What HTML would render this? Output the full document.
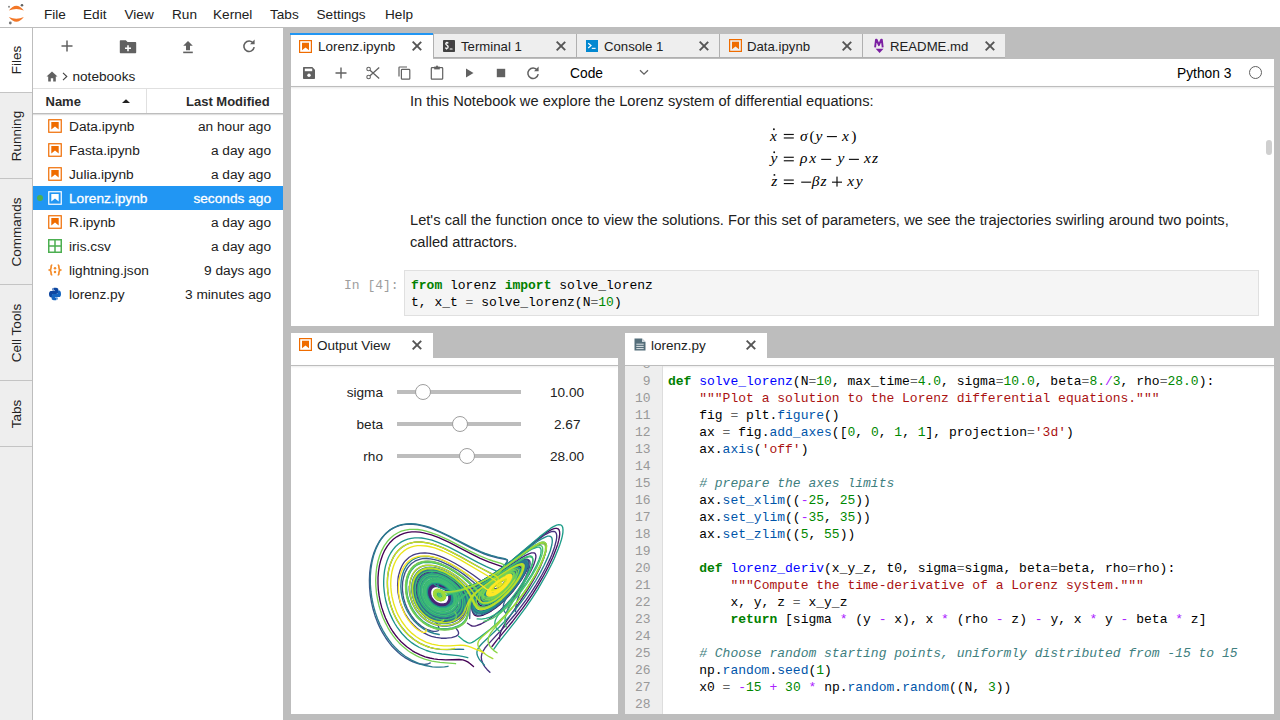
<!DOCTYPE html>
<html><head><meta charset="utf-8">
<style>
*{box-sizing:border-box;margin:0;padding:0}
html,body{width:1280px;height:720px;overflow:hidden;background:#fff}
body{position:relative;font-family:"Liberation Sans",sans-serif;color:#212121;font-size:13.5px}
.a{position:absolute}
.t{position:absolute;white-space:nowrap;line-height:1}
/* menubar */
#menubar{left:0;top:0;width:1280px;height:28px;background:#fff;border-bottom:1px solid #bdbdbd}
.mi{position:absolute;top:8px;font-size:13.6px;color:#212121;line-height:14px}
/* left sidebar */
#sidebar{left:0;top:28px;width:33px;height:692px;background:#eeeeee;border-right:1px solid #bdbdbd}
.stab{position:absolute;left:0;width:32px;border-bottom:1px solid #c4c4c4}
.stab span{position:absolute;left:calc(50% + 1px);top:50%;transform:translate(-50%,-50%) rotate(-90deg);white-space:nowrap;font-size:13.5px;color:#212121;line-height:14px}
/* file browser */
#fb{left:33px;top:28px;width:250px;height:692px;background:#fff}
.frow{position:absolute;left:33px;width:250px;height:24px}
.frow .nm{position:absolute;left:36px;top:6px;font-size:13.7px;line-height:14px}
.frow .md{position:absolute;right:12px;top:6px;font-size:13.7px;line-height:14px;text-align:right}
.frow svg{position:absolute;left:15px;top:5px}
#dock{left:283px;top:28px;width:997px;height:692px;background:#bdbdbd}
.tab{position:absolute;height:24px;width:143px;background:#eeeeee;border-left:1px solid #b0b0b0;border-bottom:1px solid #b0b0b0}
.tab .tl{position:absolute;top:6px;font-size:13.2px;line-height:14px;color:#212121}
.tab .ic{position:absolute;left:9px;top:6px}
.cx{position:absolute;width:10px;height:10px}
.cx:before,.cx:after{content:"";position:absolute;left:4.2px;top:-1px;width:1.6px;height:12px;background:#555}
.cx:before{transform:rotate(45deg)}
.cx:after{transform:rotate(-45deg)}
.code{font-family:"Liberation Mono",monospace;font-size:13px;line-height:17px;white-space:pre}
.kw{color:#008000;font-weight:bold}
.df{color:#0000ff}
.pr{color:#05a}
.nu{color:#080}
.st{color:#a11}
.op{color:#aa22ff}
.cm{color:#408080;font-style:italic}
.ln{color:#999}
.eqo{color:#666}
.slab{position:absolute;font-size:13.6px;line-height:14px;text-align:right;white-space:nowrap}
.trk{position:absolute;left:397px;width:124px;height:4px;background:#bdbdbd}
.hdl{position:absolute;width:16px;height:16px;border-radius:50%;background:#fff;border:1px solid #9e9e9e}
.lorenz{position:absolute;left:0;top:0}
.mdt{font-size:14.65px;line-height:14.65px;color:#212121}
.eq{position:absolute;font-family:"Liberation Serif",serif;font-style:italic;font-size:15.5px;line-height:15.5px;white-space:nowrap;color:#000}
.eqr{position:absolute;font-family:"Liberation Serif",serif;font-size:16px;line-height:16px;white-space:nowrap;color:#000}
.dot{position:absolute;width:1.8px;height:1.8px;background:#000;border-radius:50%}
.bar{position:absolute;height:1.2px;background:#111}
</style></head><body>
<!-- MENUBAR -->
<div id="menubar" class="a">
  <svg class="a" style="left:0;top:0" width="30" height="27" viewBox="0 0 30 27">
    <path d="M8.8 10.6Q16.3 0.9 23.9 10.6Q16.3 7.2 8.8 10.6Z" fill="#f37726"/>
    <path d="M8.8 17Q16.3 26.6 23.9 17Q16.3 20.6 8.8 17Z" fill="#f37726"/>
    <circle cx="22" cy="5.2" r="1.3" fill="#616262"/>
    <circle cx="9" cy="6.8" r="1" fill="#8a8a8a"/>
    <circle cx="10.3" cy="23" r="1.4" fill="#767677"/>
  </svg>
  <span class="mi" style="left:44px">File</span>
  <span class="mi" style="left:83px">Edit</span>
  <span class="mi" style="left:124.5px">View</span>
  <span class="mi" style="left:172px">Run</span>
  <span class="mi" style="left:213px">Kernel</span>
  <span class="mi" style="left:270px">Tabs</span>
  <span class="mi" style="left:316.5px">Settings</span>
  <span class="mi" style="left:385px">Help</span>
</div>
<!-- SIDEBAR -->
<div id="sidebar" class="a">
  <div class="stab" style="top:0;height:65px;background:#fff"><span>Files</span></div>
  <div class="stab" style="top:65px;height:86px"><span>Running</span></div>
  <div class="stab" style="top:151px;height:106px"><span>Commands</span></div>
  <div class="stab" style="top:257px;height:96px"><span>Cell Tools</span></div>
  <div class="stab" style="top:353px;height:66px"><span>Tabs</span></div>
</div>
<!-- FILE BROWSER -->
<div id="fb" class="a">
  <!-- toolbar icons -->
  <svg class="a" style="left:27px;top:11px" width="14" height="14" viewBox="0 0 14 14"><path d="M7 1.5V12.5M1.5 7H12.5" stroke="#616161" stroke-width="1.5"/></svg>
  <svg class="a" style="left:86px;top:11px" width="18" height="15" viewBox="0 0 18 15"><path d="M1.5 1.2H6.8L8.6 3H16.2C16.8 3 17.2 3.4 17.2 4V13.2C17.2 13.8 16.8 14.2 16.2 14.2H1.8C1.2 14.2 0.8 13.8 0.8 13.2V2C0.8 1.5 1.1 1.2 1.5 1.2Z" fill="#616161"/><path d="M9 6.3V12.3M6 9.3H12" stroke="#fff" stroke-width="1.6"/></svg>
  <svg class="a" style="left:149px;top:12px" width="12" height="14" viewBox="0 0 12 14"><path d="M6 1L10.8 5.8H8V10.3H4V5.8H1.2Z" fill="#616161"/><rect x="1.2" y="11.6" width="9.6" height="1.6" fill="#616161"/></svg>
  <svg class="a" style="left:209px;top:11px" width="14" height="14" viewBox="0 0 14 14"><path d="M11.3 4.2A5.2 5.2 0 1 0 12.2 8.2" fill="none" stroke="#616161" stroke-width="1.6"/><path d="M8 5.2H12.6V0.6Z" fill="#616161"/></svg>
  <!-- breadcrumb -->
  <svg class="a" style="left:13px;top:43px" width="12" height="11" viewBox="0 0 12 11"><path d="M6 0.5L11.5 5.6H9.8V10.5H7.2V7.2H4.8V10.5H2.2V5.6H0.5Z" fill="#616161"/></svg>
  <svg class="a" style="left:29px;top:44px" width="6" height="9" viewBox="0 0 6 9"><path d="M1 0.8L4.8 4.5L1 8.2" fill="none" stroke="#424242" stroke-width="1.1"/></svg>
  <span class="t" style="left:39.5px;top:42px;font-size:13.6px">notebooks</span>
  <!-- header -->
  <div class="a" style="left:0;top:60px;width:250px;height:26px;border-top:1px solid #e0e0e0;border-bottom:1px solid #bdbdbd;box-shadow:0 1px 1px rgba(0,0,0,0.12)"></div>
  <div class="a" style="left:113px;top:61px;width:1px;height:24px;background:#e0e0e0"></div>
  <span class="t" style="left:12.5px;top:67px;font-size:13px;font-weight:bold;color:#2b2b2b">Name</span>
  <svg class="a" style="left:89px;top:71px" width="8" height="4" viewBox="0 0 8 4"><path d="M0 4L4 0.2L8 4Z" fill="#212121"/></svg>
  <span class="t" style="left:153px;top:67px;font-size:13px;font-weight:bold;color:#2b2b2b">Last Modified</span>
</div>
<div class="frow" style="top:114px;"><svg width="14" height="14" viewBox="0 0 14 14"><rect x="0.75" y="0.75" width="12.5" height="12.5" fill="none" stroke="#ef6c00" stroke-width="1.2"/><path d="M3.3 3H10.7V10.6L7 7.6L3.3 10.6Z" fill="#ef6c00"/></svg><span class="nm">Data.ipynb</span><span class="md">an hour ago</span></div>
<div class="frow" style="top:138px;"><svg width="14" height="14" viewBox="0 0 14 14"><rect x="0.75" y="0.75" width="12.5" height="12.5" fill="none" stroke="#ef6c00" stroke-width="1.2"/><path d="M3.3 3H10.7V10.6L7 7.6L3.3 10.6Z" fill="#ef6c00"/></svg><span class="nm">Fasta.ipynb</span><span class="md">a day ago</span></div>
<div class="frow" style="top:162px;"><svg width="14" height="14" viewBox="0 0 14 14"><rect x="0.75" y="0.75" width="12.5" height="12.5" fill="none" stroke="#ef6c00" stroke-width="1.2"/><path d="M3.3 3H10.7V10.6L7 7.6L3.3 10.6Z" fill="#ef6c00"/></svg><span class="nm">Julia.ipynb</span><span class="md">a day ago</span></div>
<div class="frow" style="top:186px;background:#2196f3;color:#fff;"><div class="a" style="left:4px;top:9px;width:6px;height:6px;border-radius:50%;background:#4caf50"></div><svg width="14" height="14" viewBox="0 0 14 14"><rect x="0.75" y="0.75" width="12.5" height="12.5" fill="none" stroke="#fff" stroke-width="1.2"/><path d="M3.3 3H10.7V10.6L7 7.6L3.3 10.6Z" fill="#fff"/></svg><span class="nm" style="-webkit-text-stroke:0.3px #fff">Lorenz.ipynb</span><span class="md" style="-webkit-text-stroke:0.3px #fff">seconds ago</span></div>
<div class="frow" style="top:210px;"><svg width="14" height="14" viewBox="0 0 14 14"><rect x="0.75" y="0.75" width="12.5" height="12.5" fill="none" stroke="#ef6c00" stroke-width="1.2"/><path d="M3.3 3H10.7V10.6L7 7.6L3.3 10.6Z" fill="#ef6c00"/></svg><span class="nm">R.ipynb</span><span class="md">a day ago</span></div>
<div class="frow" style="top:234px;"><svg width="14" height="14" viewBox="0 0 14 14"><rect x="0.75" y="0.75" width="12.5" height="12.5" fill="none" stroke="#4caf50" stroke-width="1.5"/><path d="M7 1V13M1 7H13" stroke="#4caf50" stroke-width="1.5"/></svg><span class="nm">iris.csv</span><span class="md">a day ago</span></div>
<div class="frow" style="top:258px;"><svg width="14" height="14" viewBox="0 0 14 14"><path d="M4.3 2.2C3 2.2 3.1 3.2 3.1 4.4S3 6.4 1.6 7C3 7.6 3.1 8.6 3.1 9.8S3 11.8 4.3 11.8M9.7 2.2C11 2.2 10.9 3.2 10.9 4.4S11 6.4 12.4 7C11 7.6 10.9 8.6 10.9 9.8S11 11.8 9.7 11.8" fill="none" stroke="#f48c2a" stroke-width="1.7"/><circle cx="7" cy="5.2" r="1.25" fill="#f48c2a"/><circle cx="7" cy="8.9" r="1.25" fill="#f48c2a"/></svg><span class="nm">lightning.json</span><span class="md">9 days ago</span></div>
<div class="frow" style="top:282px;"><svg width="14" height="14" viewBox="0 0 14 14"><path d="M6.9 0.8C4.2 0.8 4.4 2 4.4 2V3.4H7V3.9H3.2C3.2 3.9 1 3.6 1 7.1S3 10.4 3 10.4H4.1V8.8C4.1 8.8 4 6.9 6 6.9H8.5C8.5 6.9 10.3 6.9 10.3 5.1V2.3C10.3 2.3 10.6 0.8 6.9 0.8ZM5.5 1.6A0.5 0.5 0 1 1 5.5 2.6A0.5 0.5 0 1 1 5.5 1.6Z" fill="#0d47a1"/><path d="M7.1 13.2C9.8 13.2 9.6 12 9.6 12V10.6H7V10.1H10.8C10.8 10.1 13 10.4 13 6.9S11 3.6 11 3.6H9.9V5.2C9.9 5.2 10 7.1 8 7.1H5.5C5.5 7.1 3.7 7.1 3.7 8.9V11.7C3.7 11.7 3.4 13.2 7.1 13.2ZM8.5 12.4A0.5 0.5 0 1 1 8.5 11.4A0.5 0.5 0 1 1 8.5 12.4Z" fill="#1565c0"/></svg><span class="nm">lorenz.py</span><span class="md">3 minutes ago</span></div>
<div id="dock" class="a"></div>
<!-- NOTEBOOK PANEL -->
<div class="a" style="left:290px;top:33px;width:143px;height:27px;background:#fff;border-top:2px solid #2196f3"></div><div class="a" style="left:290px;top:35px;width:1px;height:25px;background:#b9b9b9"></div>
<div class="a" style="left:299px;top:40px"><svg class="ic" width="13" height="13" viewBox="0 0 13 13"><rect x="0.6" y="0.6" width="11.8" height="11.8" fill="none" stroke="#ef6c00" stroke-width="1.2"/><path d="M3 2.8H10V10.2L6.5 7.4L3 10.2Z" fill="#ef6c00"/></svg></div>
<span class="t" style="left:318px;top:40px;font-size:13.5px">Lorenz.ipynb</span>
<div class="cx" style="left:412px;top:41px"></div>
<div class="tab" style="left:433px;top:34px"><svg class="ic" style="top:6px;left:9px" width="12" height="12" viewBox="0 0 12 12"><rect x="0" y="0" width="12" height="12" rx="0.8" fill="#424242"/><path d="M5.2 3.4C4.8 2.6 3.2 2.5 2.8 3.4C2.4 4.4 3.6 5 4.2 5.4C5 5.9 5.4 6.6 5 7.6C4.5 8.6 2.8 8.5 2.3 7.7" fill="none" stroke="#fff" stroke-width="1.3"/><path d="M3.9 1.8V2.6M3.6 8.6V9.6" stroke="#fff" stroke-width="1"/><rect x="6.6" y="8.6" width="3" height="1" rx="0.5" fill="#fff"/><circle cx="8.2" cy="2.2" r="0.45" fill="#4a2a4a"/><circle cx="8.2" cy="4.2" r="0.45" fill="#4a2a4a"/><circle cx="8.2" cy="6.2" r="0.45" fill="#4a2a4a"/></svg><span class="tl" style="left:27px">Terminal 1</span><div class="cx" style="left:122px;top:7px"></div></div>
<div class="tab" style="left:576px;top:34px"><svg class="ic" style="top:6px;left:9px" width="12" height="12" viewBox="0 0 12 12"><rect x="0" y="0" width="12" height="12" fill="#0288d1"/><path d="M2.2 3.2L5 5.6L2.2 8" fill="none" stroke="#fff" stroke-width="1.2"/><rect x="5.8" y="7.8" width="3.8" height="1.1" fill="#fff"/></svg><span class="tl" style="left:27px">Console 1</span><div class="cx" style="left:122px;top:7px"></div></div>
<div class="tab" style="left:719px;top:34px"><svg class="ic" style="top:5px;left:9px" width="13" height="13" viewBox="0 0 13 13"><rect x="0.6" y="0.6" width="11.8" height="11.8" fill="none" stroke="#ef6c00" stroke-width="1.2"/><path d="M3 2.8H10V10.2L6.5 7.4L3 10.2Z" fill="#ef6c00"/></svg><span class="tl" style="left:27px">Data.ipynb</span><div class="cx" style="left:122px;top:7px"></div></div>
<div class="tab" style="left:862px;top:34px;border-right:0"><svg class="ic" style="top:3px;left:9px" width="14" height="20" viewBox="0 0 14 20"><path d="M3.1 10.4L4 2.6H4.6L6.9 8.2L9.2 2.6H9.8L10.7 10.4" fill="none" stroke="#7b1fa2" stroke-width="1.9" stroke-linejoin="round"/><path d="M3.7 11.8H11.5L7.6 16Z" fill="#7b1fa2"/></svg><span class="tl" style="left:27px">README.md</span><div class="cx" style="left:122px;top:7px"></div></div>
<div class="a" style="left:291px;top:59px;width:983px;height:267px;background:#fff"></div>
<div class="a" style="left:291px;top:86px;width:983px;height:1px;background:#bdbdbd;box-shadow:0 1px 2px rgba(0,0,0,0.15)"></div>

<!-- NB TOOLBAR -->
<svg class="a" style="left:303px;top:67px" width="12" height="12" viewBox="0 0 12 12"><path d="M0 1C0 0.4 0.4 0 1 0H9.3L12 2.7V11C12 11.6 11.6 12 11 12H1C0.4 12 0 11.6 0 11Z" fill="#616161"/><rect x="1.8" y="1.6" width="7.4" height="2.6" fill="#fff"/><circle cx="6" cy="8.3" r="1.7" fill="#fff"/></svg>
<svg class="a" style="left:335px;top:67px" width="12" height="12" viewBox="0 0 12 12"><path d="M6 0.5V11.5M0.5 6H11.5" stroke="#616161" stroke-width="1.4"/></svg>
<svg class="a" style="left:366px;top:66px" width="14" height="14" viewBox="0 0 14 14"><circle cx="2.6" cy="3" r="1.8" fill="none" stroke="#616161" stroke-width="1.1"/><circle cx="2.6" cy="11" r="1.8" fill="none" stroke="#616161" stroke-width="1.1"/><path d="M4 4.2L13.2 12.6M4 9.8L13.2 1.4" stroke="#616161" stroke-width="1.3"/></svg>
<svg class="a" style="left:398px;top:66px" width="13" height="14" viewBox="0 0 13 14"><path d="M1 10.5V1.6C1 1.2 1.2 1 1.6 1H9" fill="none" stroke="#616161" stroke-width="1.2"/><rect x="3.4" y="3.4" width="8.4" height="9.8" rx="0.8" fill="none" stroke="#616161" stroke-width="1.2"/></svg>
<svg class="a" style="left:430px;top:65px" width="14" height="15" viewBox="0 0 14 15"><rect x="1.3" y="2.6" width="11.4" height="11.6" rx="0.8" fill="none" stroke="#616161" stroke-width="1.2"/><path d="M4.2 1.6H9.8V4.4H4.2Z" fill="#616161"/><circle cx="7" cy="1.4" r="1" fill="#616161"/></svg>
<svg class="a" style="left:465px;top:68px" width="9" height="10" viewBox="0 0 9 10"><path d="M1 0.6L8.5 5L1 9.4Z" fill="#616161"/></svg>
<svg class="a" style="left:496px;top:68px" width="10" height="10" viewBox="0 0 10 10"><rect x="0.8" y="0.8" width="8.4" height="8.4" fill="#616161"/></svg>
<svg class="a" style="left:526px;top:66px" width="14" height="14" viewBox="0 0 14 14"><path d="M11.3 4.2A5.2 5.2 0 1 0 12.2 8.2" fill="none" stroke="#616161" stroke-width="1.5"/><path d="M8 5.2H12.6V0.6Z" fill="#616161"/></svg>
<span class="t" style="left:570px;top:67px;font-size:13.8px;color:#000">Code</span>
<svg class="a" style="left:639px;top:69px" width="10" height="7" viewBox="0 0 10 7"><path d="M1 1.2L5 5.2L9 1.2" fill="none" stroke="#616161" stroke-width="1.3"/></svg>
<span class="t" style="left:1177px;top:67px;font-size:13.8px;color:#000">Python 3</span>
<div class="a" style="left:1249px;top:66px;width:13px;height:13px;border:1.2px solid #616161;border-radius:50%"></div>
<!-- NB CONTENT -->
<span class="t mdt" style="left:410px;top:93.6px">In this Notebook we explore the Lorenz system of differential equations:</span>
<span class="eq" style="left:769.9px;top:127.5px;">x</span>
<span class="eq" style="left:800.1px;top:127.5px;">σ</span>
<span class="eq" style="left:809.5px;top:127.5px;font-style:normal;">(</span>
<span class="eq" style="left:815.5px;top:127.5px;">y</span>
<span class="eq" style="left:842.1px;top:127.5px;">x</span>
<span class="eq" style="left:851.2px;top:127.5px;font-style:normal;">)</span>
<span class="eq" style="left:770.5px;top:150.3px;">y</span>
<span class="eq" style="left:800.1px;top:150.3px;">ρ</span>
<span class="eq" style="left:809.2px;top:150.3px;">x</span>
<span class="eq" style="left:837.5px;top:150.3px;">y</span>
<span class="eq" style="left:864.1px;top:150.3px;">x</span>
<span class="eq" style="left:872.0px;top:150.3px;">z</span>
<span class="eq" style="left:771.2px;top:173.1px;">z</span>
<span class="eq" style="left:811.7px;top:173.1px;">β</span>
<span class="eq" style="left:820.5px;top:173.1px;">z</span>
<span class="eq" style="left:847.2px;top:173.1px;">x</span>
<span class="eq" style="left:855.8px;top:173.1px;">y</span>
<svg class="a" style="left:0;top:0" width="1280" height="200" viewBox="0 0 1280 200"><g fill="#111"><rect x="783.8" y="133.9" width="10" height="1.15"/><rect x="783.8" y="137.4" width="10" height="1.15"/><rect x="826.9" y="136.0" width="10" height="1.15"/><rect x="783.8" y="156.7" width="10" height="1.15"/><rect x="783.8" y="160.2" width="10" height="1.15"/><rect x="821.2" y="158.8" width="10" height="1.15"/><rect x="848.9" y="158.8" width="10" height="1.15"/><rect x="783.8" y="179.5" width="10" height="1.15"/><rect x="783.8" y="183.0" width="10" height="1.15"/><rect x="801.2" y="181.6" width="10" height="1.15"/><rect x="832.0" y="181.6" width="10" height="1.15"/><rect x="836.4" y="176.6" width="1.2" height="10"/><circle cx="773.9" cy="129.2" r="0.95"/><circle cx="774.2" cy="152.2" r="0.95"/><circle cx="774.4" cy="174.9" r="0.95"/></g></svg>
<span class="t mdt" style="left:410px;top:212.5px;word-spacing:0.22px">Let's call the function once to view the solutions. For this set of parameters, we see the trajectories swirling around two points,</span>
<span class="t mdt" style="left:410px;top:235px">called attractors.</span>
<span class="a code" style="left:344px;top:276.5px;color:#9e9e9e">In [4]:</span>
<div class="a" style="left:404px;top:270px;width:855px;height:46px;background:#f5f5f5;border:1px solid #e0e0e0"></div>
<div class="a code" style="left:411px;top:276.5px;color:#000"><span class="kw">from</span> lorenz <span class="kw">import</span> solve_lorenz
t, x_t <span class="eqo">=</span> solve_lorenz(N<span class="eqo">=</span><span class="nu">10</span>)</div>
<div class="a" style="left:1266px;top:140px;width:6px;height:15px;border-radius:3px;background:#cfcfcf"></div>
<!-- LOWER PANELS -->
<div class="a" style="left:291px;top:333px;width:142px;height:25px;background:#fff"></div>
<div class="a" style="left:299px;top:338px"><svg class="a" width="13" height="13" viewBox="0 0 13 13"><rect x="0.6" y="0.6" width="11.8" height="11.8" fill="none" stroke="#ef6c00" stroke-width="1.2"/><path d="M3 2.8H10V10.2L6.5 7.4L3 10.2Z" fill="#ef6c00"/></svg></div>
<span class="t" style="left:317px;top:339px;font-size:13.5px">Output View</span>
<div class="cx" style="left:412px;top:340px"></div>
<div class="a" style="left:291px;top:358px;width:327px;height:356px;background:#fff"></div>
<div class="a" style="left:291px;top:365px;width:327px;height:1px;background:#bdbdbd;box-shadow:0 1px 2px rgba(0,0,0,0.12)"></div>
<span class="slab" style="right:897px;top:386px">sigma</span>
<div class="trk" style="top:390px"></div><div class="hdl" style="left:415px;top:384px"></div>
<span class="t" style="left:550px;top:386px;font-size:13.6px">10.00</span>
<span class="slab" style="right:897px;top:418px">beta</span>
<div class="trk" style="top:422px"></div><div class="hdl" style="left:452px;top:416px"></div>
<span class="t" style="left:554px;top:418px;font-size:13.6px">2.67</span>
<span class="slab" style="right:897px;top:450px">rho</span>
<div class="trk" style="top:454px"></div><div class="hdl" style="left:459px;top:448px"></div>
<span class="t" style="left:550px;top:450px;font-size:13.6px">28.00</span>
<div class="a" style="left:625px;top:333px;width:142px;height:25px;background:#fff"></div>
<div class="a" style="left:634px;top:338px"><svg class="a" width="12" height="13" viewBox="0 0 12 13"><path d="M0.5 0.5H8L11.5 4V12.5H0.5Z" fill="#546e7a"/><path d="M8 0.5V4H11.5" fill="#cfd8dc"/><path d="M2.3 6.2H9.7M2.3 8.4H9.7M2.3 10.6H9.7" stroke="#dfe5e8" stroke-width="1"/></svg></div>
<span class="t" style="left:651px;top:339px;font-size:13.5px">lorenz.py</span>
<div class="cx" style="left:746px;top:340px"></div>
<div class="a" style="left:625px;top:358px;width:649px;height:356px;background:#fff"></div>
<div class="a" style="left:625px;top:365px;width:649px;height:1px;background:#bdbdbd;box-shadow:0 1px 2px rgba(0,0,0,0.12)"></div>
<div class="a" style="left:625px;top:366px;width:38px;height:348px;background:#eeeeee"></div>
<div class="a" style="left:625px;top:366px;width:649px;height:348px;overflow:hidden">
<div class="a" style="left:37px;top:0;width:1px;height:348px;background:#dddddd"></div>
<div class="a code ln" style="left:0;top:-10.1px;width:25.5px;text-align:right">8
9
10
11
12
13
14
15
16
17
18
19
20
21
22
23
24
25
26
27
28
29</div>
<div class="a code" style="left:43px;top:-10.1px;color:#000">
<span class="kw">def</span> <span class="df">solve_lorenz</span>(N<span class="eqo">=</span><span class="nu">10</span>, max_time<span class="eqo">=</span><span class="nu">4.0</span>, sigma<span class="eqo">=</span><span class="nu">10.0</span>, beta<span class="eqo">=</span><span class="nu">8.</span><span class="op">/</span><span class="nu">3</span>, rho<span class="eqo">=</span><span class="nu">28.0</span>):
    <span class="st">"""Plot a solution to the Lorenz differential equations."""</span>
    fig <span class="eqo">=</span> plt.<span class="pr">figure</span>()
    ax <span class="eqo">=</span> fig.<span class="pr">add_axes</span>([<span class="nu">0</span>, <span class="nu">0</span>, <span class="nu">1</span>, <span class="nu">1</span>], projection<span class="eqo">=</span><span class="st">'3d'</span>)
    ax.<span class="pr">axis</span>(<span class="st">'off'</span>)

    <span class="cm"># prepare the axes limits</span>
    ax.<span class="pr">set_xlim</span>((<span class="op">-</span><span class="nu">25</span>, <span class="nu">25</span>))
    ax.<span class="pr">set_ylim</span>((<span class="op">-</span><span class="nu">35</span>, <span class="nu">35</span>))
    ax.<span class="pr">set_zlim</span>((<span class="nu">5</span>, <span class="nu">55</span>))

    <span class="kw">def</span> <span class="df">lorenz_deriv</span>(x_y_z, t0, sigma<span class="eqo">=</span>sigma, beta<span class="eqo">=</span>beta, rho<span class="eqo">=</span>rho):
        <span class="st">"""Compute the time-derivative of a Lorenz system."""</span>
        x, y, z <span class="eqo">=</span> x_y_z
        <span class="kw">return</span> [sigma <span class="op">*</span> (y <span class="op">-</span> x), x <span class="op">*</span> (rho <span class="op">-</span> z) <span class="op">-</span> y, x <span class="op">*</span> y <span class="op">-</span> beta <span class="op">*</span> z]

    <span class="cm"># Choose random starting points, uniformly distributed from -15 to 15</span>
    np.<span class="pr">random</span>.<span class="pr">seed</span>(<span class="nu">1</span>)
    x0 <span class="eqo">=</span> <span class="op">-</span><span class="nu">15</span> <span class="op">+</span> <span class="nu">30</span> <span class="op">*</span> np.<span class="pr">random</span>.<span class="pr">random</span>((N, <span class="nu">3</span>))

    </div>
</div>
<svg class="lorenz" width="1280" height="720" viewBox="0 0 1280 720"><g fill="none" stroke-width="1.35" stroke-linecap="round" stroke-linejoin="round"><path stroke="#440154" d="M473.5 666.6 469.9 663.5 467.7 661.9 465.6 660.8 462.9 659.9 459.1 659.5 445.8 659.8 437.7 659.4 433.9 658.8 429.8 658.0 425.2 656.8 420.3 654.9 415.1 652.4 412.4 650.8 406.8 646.8 401.1 641.7 398.3 638.6 395.5 635.2 392.8 631.5 390.2 627.3 387.8 622.9 385.5 618.0 383.5 612.8 381.7 607.4 380.2 601.6 379.1 595.7 378.3 589.6 378.0 583.5 378.0 577.4 378.5 571.4 379.4 565.7 380.8 560.2 382.6 555.0 384.7 550.3 387.3 546.1 390.1 542.4 393.3 539.3 396.7 536.8 400.2 534.8 404.0 533.3 407.8 532.4 411.8 531.9 415.7 531.8 419.7 532.2 423.6 532.8 427.5 533.8 431.4 534.9 438.8 537.7 449.2 542.4 471.7 554.1 480.2 558.3 488.6 561.9 501.4 566.4 502.4 567.1 503.0 568.1 502.8 569.3 502.0 570.8 499.4 573.8 491.2 582.0 487.9 585.6 485.3 588.8 483.5 592.0 482.7 594.7 482.6 596.0 482.8 597.1 483.3 598.1 484.0 598.9 485.0 599.4 486.2 599.8 488.0 599.8 490.2 599.3 492.4 598.6 494.9 597.3 499.9 594.0 504.8 589.6 507.9 586.4 510.2 583.5 512.3 580.7 513.9 578.0 515.0 575.5 515.5 573.5 515.3 572.1 514.6 571.5 513.2 571.3 510.5 572.0 507.1 573.6 503.3 575.8 497.9 579.3 492.9 582.8 488.7 586.1 485.5 589.0 483.5 591.3 482.0 593.4 481.1 595.3 480.7 597.3 480.8 599.0 481.6 600.6 482.7 601.6 484.4 602.2 486.3 602.3 488.6 601.9 491.3 600.9 494.0 599.6 497.0 597.7 499.6 595.9 503.0 593.0 505.8 590.2 508.7 587.2 511.4 583.9 513.8 580.6 515.7 577.3 517.1 574.3 517.7 571.9 517.7 571.0 517.5 570.2 516.8 569.5 515.0 569.4 512.6 570.1 508.7 571.9 504.3 574.4 497.1 579.0 490.7 583.5 485.6 587.5 482.3 590.6 480.3 593.0 478.7 595.5 477.8 597.8 477.5 600.2 477.8 602.4 478.8 604.3 480.3 605.4 482.3 606.1 484.7 606.0 487.3 605.5 490.4 604.3 493.4 602.7 496.8 600.5 500.5 597.6 503.8 594.8 507.1 591.4 510.5 587.7 513.7 583.6 516.6 579.5 518.4 576.4 520.2 572.6 521.0 570.2 521.1 568.9 521.0 567.8 520.3 566.8 519.5 566.4 518.4 566.4 515.5 567.1 510.8 569.4 505.4 572.5 495.6 578.9 486.5 585.3 481.1 589.5 476.9 593.5 474.6 596.7 473.0 599.9 472.0 603.5 471.8 607.3 472.2 610.9 473.4 613.6 474.2 614.7 475.2 615.4 476.3 615.8 477.6 616.0 480.1 615.9 483.4 615.0 487.3 613.2 491.5 610.8 495.6 607.9 500.4 604.1 504.6 600.2 509.1 595.6 513.8 590.2 517.2 585.7 521.6 579.4 524.4 574.7 526.7 570.1 528.3 566.1 528.9 562.8 528.8 561.2 528.6 560.5 527.8 559.7 527.2 559.4 525.7 559.3 523.8 559.8 520.2 561.2 514.5 564.4 492.4 578.8 476.3 589.0 470.4 593.0 467.7 595.1 465.2 597.5 462.8 600.1 457.3 607.0 455.6 608.7 453.6 610.3 450.8 611.8 448.1 612.8 444.9 613.4 441.9 613.4"/><path stroke="#470d60" d="M492.0 646.5 496.7 640.4 512.7 621.2 522.2 608.9 527.4 601.7 532.7 593.8 538.1 585.1 543.4 576.0 548.4 566.5 552.8 557.2 556.3 548.3 557.7 544.2 558.7 540.4 559.4 537.0 559.7 534.1 559.6 531.8 559.1 530.0 558.1 528.8 556.7 528.3 554.9 528.4 552.6 529.1 550.0 530.4 547.0 532.2 543.7 534.5 536.3 540.3 511.0 561.2 498.5 570.5 490.6 575.7 483.3 580.0 476.6 583.3 470.4 585.8 467.5 586.8 462.2 588.3 455.2 589.4 449.2 589.5 445.8 589.1 442.9 588.4 440.3 587.5 437.2 585.8 435.6 584.5 433.9 582.6 433.0 580.6 432.7 578.8 433.0 577.3 433.5 576.5 434.2 575.8 435.1 575.3 436.7 574.8 437.9 574.8 439.9 575.0 442.0 575.5 444.1 576.3 448.2 578.6 452.5 582.0 455.9 585.7 458.9 589.9 460.8 593.8 461.9 597.5 462.4 601.4 462.2 604.9 461.2 608.4 459.6 611.3 457.3 613.9 454.6 615.9 450.9 617.6 447.5 618.4 443.4 618.7 439.6 618.4 435.3 617.3 431.7 615.7 428.1 613.3 424.5 610.1 422.1 607.2 419.2 602.5 417.6 598.6 416.5 594.4 416.1 590.1 416.3 585.9 417.2 582.0 418.8 578.7 421.0 575.9 422.8 574.5 424.8 573.3 426.9 572.5 429.1 572.1 431.4 571.9 434.8 572.1 437.2 572.5 440.6 573.5 443.8 574.9 446.9 576.4 449.7 578.1 453.1 580.6 456.1 583.0 458.6 585.4 461.1 588.4 463.1 591.1 464.7 593.7 466.0 596.6 467.1 599.7 467.7 602.5 468.2 605.7 468.3 609.2 468.2 612.6 467.7 615.6 467.0 617.9 466.2 619.8 465.1 621.5 463.6 623.1 461.8 624.6 459.9 625.8 457.4 627.0 454.9 628.0 449.7 629.2 444.6 629.5 439.6 629.2 435.0 628.2 430.0 626.3 426.0 624.2 421.9 621.3 417.9 617.6 414.1 612.9 410.8 607.3 408.2 600.9 406.9 596.4 406.1 591.6 405.9 589.2 406.0 584.5 406.6 580.0 407.7 575.7 409.4 571.9 411.6 568.7 414.2 566.0 415.7 564.9 418.8 563.2 422.1 562.1 423.9 561.7 427.5 561.5 431.1 561.7 436.5 562.7 441.6 564.5 446.5 566.6 452.4 569.8 457.6 573.0 464.0 577.8 469.7 582.6 474.3 587.2 480.5 594.1 482.5 595.9 483.9 596.9 485.4 597.6 487.0 597.9 488.4 598.0 490.3 597.7 492.0 597.3 494.3 596.3 496.3 595.3 501.3 591.8 505.9 587.5 510.1 582.5 511.8 580.0 513.1 577.6 513.9 575.6 514.1 574.0 513.7 572.9 513.0 572.5 511.5 572.5 508.9 573.3 505.7 574.9 501.6 577.3 496.7 580.5 492.4 583.8 488.8 586.7 486.4 589.1 484.6 591.2 483.4 593.2 482.6 595.2 482.5 596.9 482.9 598.4 483.8 599.5 485.3 600.2 487.2 600.3 489.4 600.0 491.5 599.3 496.0 597.0 501.4 593.1 506.5 588.3 511.3 582.6 513.2 579.6 514.8 576.9 515.7 574.5 516.0 573.0 515.7 571.6 514.9 571.0 513.3 570.9 510.5 571.8 506.9 573.5 503.0 575.8 497.4 579.4 491.7 583.5 487.6 586.8 484.5 589.8 482.5 592.1 481.2 594.1 480.3 596.3 480.0 598.3 480.3 599.9 481.1 601.5 482.7 602.5 484.5 603.0 487.3 602.8 490.4 601.8 493.6 600.3 497.3 598.0 501.4 594.9 505.0 591.6 508.7 587.7 512.2 583.4"/><path stroke="#481a6c" d="M499.5 638.8 499.8 635.7 500.5 632.6 501.8 629.5 504.4 624.5 507.9 619.0 520.4 600.9 527.7 589.7 535.0 577.4 539.8 567.9 543.5 559.0 545.2 553.8 545.7 551.5 546.0 547.6 545.8 546.1 545.4 545.0 544.7 544.2 543.7 543.7 542.5 543.5 541.0 543.7 537.4 545.1 532.9 547.6 525.1 552.9 507.6 565.7 499.0 571.7 488.4 578.4 479.0 583.4 473.0 586.2 467.6 588.3 463.0 589.8 457.9 591.1 453.7 591.9 449.0 592.4 444.8 592.4 441.1 592.0 442.3 594.0 442.6 595.8 442.5 596.6 442.1 597.2 441.5 597.8 440.8 598.1 439.6 598.1 438.5 597.7 437.5 597.0 436.7 595.9 436.3 594.8 436.3 593.6 436.8 592.8 437.6 592.2 438.8 592.1 440.1 592.5 441.3 593.3 442.2 594.5 442.6 595.7 442.5 596.9 441.8 597.8 440.8 598.3 439.5 598.3 438.4 597.8 437.3 597.0 436.5 595.9 436.1 594.7 436.1 593.6 436.6 592.7 437.5 592.0 438.8 591.9 440.2 592.3 441.4 593.1 442.4 594.4 442.8 595.8 442.6 597.0 441.9 598.0 440.8 598.5 439.5 598.4 438.2 598.0 437.1 597.1 436.3 596.0 435.9 594.7 435.9 593.5 436.4 592.6 437.3 591.9 438.7 591.7 440.1 592.1 441.5 593.0 442.5 594.3 443.0 595.8 442.9 597.1 442.1 598.1 441.0 598.7 439.6 598.7 438.3 598.2 437.0 597.3 436.1 596.0 435.7 594.6 435.7 593.4 436.2 592.4 437.2 591.6 438.7 591.5 440.3 591.9 441.7 592.9 442.8 594.3 443.2 595.9 443.1 597.3 442.2 598.4 441.0 598.9 439.5 598.9 438.1 598.4 436.9 597.4 435.9 596.0 435.4 594.5 435.5 593.2 436.1 592.1 437.2 591.4 438.1 591.2 439.3 591.3 440.4 591.8 441.5 592.5 442.4 593.3 443.0 594.3 443.4 595.4 443.5 596.4 443.3 597.5 442.8 598.2 442.0 598.8 441.1 599.1 440.0 599.2 438.9 598.9 437.7 598.4 436.8 597.6"/><path stroke="#482576" d="M467.5 623.2 470.9 625.5 472.2 626.0 473.4 626.2 475.0 626.1 476.6 625.7 481.0 624.0 487.0 620.6 493.8 615.8 500.3 610.2 506.7 604.0 513.8 596.1 519.8 588.6 525.5 580.2 529.4 573.8 531.6 569.5 533.5 565.5 535.3 560.1 535.9 557.2 535.9 556.0 535.5 554.1 535.0 553.4 534.4 553.0 533.6 552.8 531.5 552.9 528.8 553.8 525.6 555.4 520.0 558.7 499.0 572.9 487.4 580.2 476.5 586.3 459.3 595.1 455.5 597.4 449.1 601.7 445.7 603.3 444.1 603.7 442.3 603.9 440.5 603.8 438.7 603.3 436.9 602.6 435.5 601.7 433.8 600.3 432.7 599.0 431.5 597.1 430.9 595.5 430.6 593.8 430.5 592.1 430.8 590.5 431.4 589.2 432.3 588.0 433.5 587.2 434.8 586.6 436.7 586.3 438.6 586.5 440.6 587.1 442.4 588.0 444.4 589.4 445.9 590.8 447.2 592.5 448.2 594.3 448.7 596.1 448.9 597.9 448.7 599.5 448.0 601.2 447.1 602.4 445.8 603.5 444.2 604.2 442.7 604.5 441.0 604.5 439.2 604.3 437.3 603.6 435.4 602.6 434.0 601.5 432.7 600.2 431.6 598.6 430.7 596.9 430.1 595.1 429.8 593.3 429.9 591.5 430.3 589.8 430.8 588.7 431.8 587.5 433.0 586.5 434.5 585.9 436.5 585.7 438.7 585.9 440.8 586.5 442.8 587.5 444.9 589.0 446.7 590.8 448.1 592.7 449.0 594.6 449.6 596.5 449.7 598.3 449.4 600.0 448.7 601.8 447.6 603.1 446.2 604.2 444.5 604.9 442.9 605.3 441.1 605.3 439.1 605.0 437.1 604.3 435.5 603.5 433.9 602.4 432.5 601.0 431.2 599.3 430.2 597.5 429.5 595.5 429.1 593.5 429.1 591.5 429.4 589.7 430.0 588.4 431.0 587.0 432.3 586.0 433.9 585.3 436.1 584.9 438.4 585.1 440.7 585.8 442.9 586.8 445.2 588.4 447.1 590.3 448.7 592.3 449.7 594.4 450.4 596.4 450.6 598.3 450.3 600.4 449.5 602.3 448.4 603.7 446.7 605.0 444.9 605.8 442.7 606.2 440.7 606.1 438.6 605.7 436.9 605.1 434.7 603.9 433.0 602.6 431.5 601.0 430.2 599.2 429.2 597.1 428.5 594.9 428.2 592.7 428.2 591.1 428.7 589.0 429.3 587.7 430.5 586.2 431.9 585.1 433.7 584.4 436.1 584.0 438.6 584.3 441.1 585.1 443.5 586.3 446.0 588.1 448.0 590.1 449.6 592.3 450.7 594.5 451.4 596.9 451.5 599.0 451.2 601.1 450.3 603.1 449.1 604.6 447.3 605.9 445.3 606.7 443.0 607.2 440.9 607.1 438.6 606.7 436.7 606.0 434.8 605.0 433.0 603.7 431.2 602.0 429.7 600.1 428.5 597.9 427.7 595.5 427.2 593.0 427.2 591.2 427.6 588.9 428.2 587.4 429.5 585.6 431.0 584.3 432.9 583.5 435.6 583.1 437.8 583.2 440.5 584.0 443.2 585.2 446.0 587.0 448.3 589.2 450.1 591.5 451.5 593.8 452.4 596.4 452.7 598.6 452.5 600.9 451.8 603.1 450.7 604.7 449.0 606.3 447.1 607.4"/><path stroke="#46307e" d="M489.9 672.3 487.0 669.4 484.9 666.8 483.3 664.3 482.3 662.1 481.6 660.0 481.3 657.1 481.7 654.4 482.6 651.8 484.8 648.3 488.0 644.4 506.0 625.0 516.5 612.7 526.1 599.9 531.1 592.6 536.2 584.6 541.2 576.2 545.9 567.5 550.0 558.9 551.8 554.7 554.6 546.9 556.3 540.3 556.7 537.5 556.7 535.2 556.3 533.5 555.5 532.2 554.3 531.5 552.7 531.4 550.7 531.8 548.4 532.8 545.7 534.3 542.8 536.2 536.1 541.1 512.8 560.0 504.9 566.0 497.2 571.4 490.0 576.1 483.3 580.0 477.0 583.1 471.3 585.5 463.7 587.9 457.1 589.2 451.5 589.6 448.4 589.4 445.6 589.1 443.1 588.5 440.1 587.3 438.5 586.4 436.7 584.9 435.5 583.4 434.8 581.6 435.0 580.1 436.0 579.0 436.6 578.7 437.9 578.4 439.4 578.4 440.9 578.7 443.7 579.7 447.0 581.7 450.0 584.1 452.9 587.3 455.2 590.5 456.7 593.7 457.6 596.8 457.9 599.7 457.7 602.4 456.9 605.2 455.5 607.8 453.7 609.8 451.3 611.5 448.8 612.6 445.8 613.3 442.9 613.5 439.7 613.2 436.3 612.3 433.5 611.0 430.6 609.2 427.9 606.8 425.4 603.8 423.4 600.3 422.2 597.4 421.2 593.3 421.0 590.2 421.6 586.3 422.5 583.6 423.9 581.4 425.7 579.5 427.0 578.6 428.6 577.8 431.8 577.0 433.6 576.9 436.2 577.1 440.5 578.2 445.4 580.4 449.6 583.2 453.6 586.8 456.8 590.9 459.0 594.8 460.1 598.4 460.5 602.2 460.3 604.1 459.9 605.9 459.3 607.7 458.4 609.3 456.2 612.0 453.5 614.1 450.0 615.7 446.7 616.5 442.8 616.7 439.2 616.3 435.2 615.1 431.9 613.6 428.6 611.3 425.4 608.3 423.2 605.6 420.7 601.3 419.3 597.7 418.4 594.0 418.0 590.2 418.1 587.7 418.5 585.3 419.5 582.0 421.1 579.2 423.3 576.9 424.9 575.8 426.7 574.9 428.7 574.3 431.7 573.9 433.8 573.9 437.0 574.3 442.1 575.9 445.0 577.2 447.7 578.7 450.1 580.4 453.1 582.6 455.6 585.0 457.8 587.2 461.0 591.6 463.3 596.1 464.0 598.4 464.6 601.0 464.9 603.4 464.8 606.0 464.6 608.0 464.0 610.3 463.1 612.5 462.1 614.2 460.8 615.9 459.5 617.3 457.9 618.5 455.9 619.7 453.6 620.8 451.5 621.5 447.0 622.4 442.3 622.5 437.8 621.8 432.8 620.2 428.6 618.0 424.3 614.8 421.3 611.7 418.4 608.0 416.0 603.7 414.1 598.9 412.9 593.7 412.4 588.5 412.9 583.5 414.2 578.9 415.6 576.2 416.4 574.9 418.2 572.8 420.3 571.1 423.9 569.2 426.5 568.5 430.6 568.2 434.8 568.6 438.9 569.6 442.8 571.0 447.7 573.4 452.1 576.0 456.8 579.4 460.7 582.8 464.3 586.6 467.1 590.0 469.2 593.1 471.2 596.8 474.6 603.7 476.6 606.5 477.8 607.5 479.3 608.2 481.0 608.6 482.7 608.7 485.2 608.2 488.2 607.2 491.2 605.8 494.6 603.8 498.4 601.0 501.8 598.2 508.2 592.0 511.9 587.7 514.6 584.3 517.9 579.6 520.0 576.0 522.2 571.7 523.1 568.9 523.3 566.7 522.8 565.2 521.6 564.5 520.3 564.5 518.8 564.8 515.0 566.3 510.5 568.7 501.9 574.1 488.3 583.1 481.5 588.0 477.1 591.5 473.6 595.0 471.0 598.5 468.9 602.8 466.4 610.7 464.9 614.1 462.7 617.5 459.8 620.3"/><path stroke="#443b84" d="M456.0 628.1 458.0 631.1 458.4 632.0 458.6 633.1 458.4 634.1 457.8 634.9 456.9 635.7 455.7 636.3 451.6 637.6 446.5 638.2 441.1 638.2 435.9 637.4 431.5 636.3 428.3 635.2 423.4 632.7 419.9 630.5 416.4 627.8 413.0 624.5 409.6 620.6 408.0 618.4 404.9 613.5 403.6 610.9 401.1 605.1 400.1 602.1 398.6 595.7 398.0 592.4 397.6 585.7 398.0 579.2 398.4 576.1 400.1 570.2 401.2 567.5 402.4 565.0 403.9 562.7 405.5 560.7 407.3 558.9 409.2 557.3 411.3 556.0 413.4 554.9 415.6 554.1 420.2 553.1 425.0 552.9 429.7 553.4 434.5 554.4 439.1 555.8 443.5 557.6 449.7 560.5 455.3 563.5 460.3 566.5 466.2 570.2 473.3 575.0 488.4 586.2 490.3 587.4 492.0 588.2 493.8 588.7 495.6 588.6 497.6 588.1 499.6 587.1 501.9 585.3 503.8 583.3 504.9 581.4 504.9 580.8 504.7 580.4 503.6 580.3 501.6 581.1 498.9 582.7 496.5 584.7 494.7 586.5 493.7 588.0 493.5 589.2 493.7 589.7 494.1 589.9 495.4 590.0 497.2 589.3 499.2 588.1 501.3 586.5 503.2 584.5 504.7 582.6 505.3 581.0 505.3 580.4 505.0 580.1 503.8 580.0 501.6 580.9 498.8 582.7 496.2 584.8 494.4 586.7 493.2 588.4 493.1 589.7 493.5 590.2 494.0 590.4 495.5 590.2 497.5 589.4 499.7 588.0 501.9 586.1 503.9 584.0 505.3 582.0 505.8 580.4 505.6 579.9 505.3 579.7 503.9 579.7 501.4 580.8 498.4 582.8 495.6 585.0 493.8 587.0 492.8 588.7 492.6 589.4 492.7 590.1 493.1 590.5 493.6 590.7 495.2 590.6 497.3 589.7 499.6 588.3 502.0 586.3 504.2 584.0 505.7 581.8 506.2 580.1 506.1 579.6 505.7 579.3 504.2 579.4 501.5 580.6 498.3 582.7 495.3 585.1 493.4 587.2 492.3 589.0 492.1 589.7 492.2 590.4 492.6 590.9 493.1 591.1 494.8 591.1 497.0 590.2 499.5 588.7 502.0 586.6 504.4 584.1 506.0 581.7 506.7 579.8 506.5 579.2 506.1 578.9 505.4 578.8 504.3 579.1 501.4 580.4 497.9 582.7 494.9 585.3 492.9 587.5 491.8 589.3 491.6 590.1 491.7 590.9 492.1 591.4 492.7 591.6 494.2 591.6 496.4 590.8 498.6 589.6 501.0 587.8 503.4 585.5 505.4 583.2 506.8 580.9 507.2 579.4"/><path stroke="#404588" d="M506.0 615.2 506.9 611.4 509.2 606.1 512.3 600.3 523.0 582.1 525.6 577.0 527.8 572.0 529.4 567.6 530.1 563.9 530.0 562.0 529.8 561.2 529.0 560.1 527.8 559.6 527.0 559.5 525.1 559.8 521.5 561.1 517.3 563.3 511.0 567.1 493.2 578.6 475.7 589.5 469.9 593.5 465.9 596.8 462.7 600.1 457.6 606.4 454.6 609.2 452.9 610.5 450.9 611.5 448.7 612.4 446.7 612.9 443.3 613.2 440.2 613.0 436.8 612.1 434.0 610.9 431.2 609.2 428.5 606.9 426.0 604.1 424.4 601.6 422.7 597.9 421.8 594.9 421.4 591.9 421.5 588.9 422.0 586.1 422.9 583.5 424.4 581.4 425.5 580.2 426.8 579.2 429.8 577.8 431.4 577.4 433.9 577.2 438.2 577.8 442.4 579.2 446.9 581.7 451.4 585.1 454.8 588.6 457.5 592.6 459.2 596.4 460.0 600.3 459.9 603.9 459.5 605.7 458.8 607.4 457.9 609.1 456.8 610.6 454.1 613.1 450.8 614.8 448.9 615.5 446.7 616.0 443.5 616.2 440.0 615.9 436.2 615.0 433.0 613.6 429.7 611.6 427.3 609.6 424.3 606.4 422.4 603.5 420.2 599.1 419.1 595.5 418.6 591.8 418.5 588.2 419.1 584.7 420.3 581.6 422.0 579.0 424.2 576.9 425.8 575.9 427.6 575.1 429.5 574.6 431.5 574.4 433.6 574.3 436.6 574.7 441.6 576.2 444.5 577.5 447.1 578.9 449.6 580.5 452.5 582.7 455.0 585.0 457.1 587.2 460.4 591.6 462.6 596.0 463.9 600.5 464.1 602.9 464.1 605.2 463.8 607.4 463.3 609.4 462.6 611.3 461.6 613.1 460.3 614.8 458.9 616.2 457.3 617.5 455.4 618.7 453.1 619.8 450.9 620.5 447.1 621.3 442.6 621.4 438.3 620.8 433.6 619.4 429.5 617.3 425.4 614.4 421.5 610.5 418.9 606.8 416.6 602.7 414.9 598.1 413.8 593.2 413.5 588.3 414.0 583.5 415.3 579.2 417.4 575.5 420.2 572.7 422.3 571.3 425.9 569.9 429.7 569.3 433.7 569.5 437.6 570.2 441.4 571.5 446.2 573.6 450.6 576.1 454.4 578.7 458.4 582.0 462.3 585.8 465.2 589.4 467.4 592.6 469.0 595.5 470.6 598.9 473.5 606.1 475.3 609.0 476.5 610.2 477.8 610.9 479.4 611.3 481.3 611.3 483.8 610.9 486.7 610.0 489.6 608.6 493.1 606.6 497.0 603.9 500.5 601.0 507.3 594.6 511.4 590.1 514.4 586.4 517.3 582.5 520.0 578.5 522.2 574.5 524.0 570.9 525.1 567.6 525.4 565.9 525.4 564.4 524.9 563.4 524.6 563.0 523.6 562.6 521.4 562.7 517.5 564.2 512.6 566.8 507.2 570.1 481.1 587.3 474.2 592.5 471.8 594.7 469.9 596.7 466.9 600.9 462.0 610.0 460.5 612.1 458.9 613.8 456.7 615.7 454.3 617.1 451.5 618.3 448.6 619.1 445.4 619.5 442.4 619.5 439.2 619.1 435.7 618.2 432.9 617.1 430.1 615.6 427.2 613.6 424.5 611.1 421.9 608.1 420.3 605.9 418.2 602.1 417.1 599.3 415.9 594.9 415.4 592.0 415.3 589.0 415.5 586.1 416.0 583.3 416.8 580.7 418.0 578.4 419.4 576.3 421.1 574.6 423.0 573.2 425.1 572.2 428.5 571.3 430.9 571.1 434.5 571.3 436.9 571.7 440.5 572.8 443.9 574.1 447.1 575.7 450.9 578.1 454.3 580.6"/><path stroke="#3c4f8a" d="M431.7 615.7 435.5 621.0 438.3 625.7 439.0 628.2 439.0 629.3 438.5 630.2 437.7 630.9 435.8 631.4 433.3 631.3 431.3 631.0 426.7 629.3 424.2 628.0 421.5 626.2 417.3 622.8 414.6 619.9 411.9 616.5 409.4 612.6 407.1 608.3 405.2 603.5 403.7 598.4 403.2 595.7 402.5 590.3 402.4 587.6 402.6 582.2 403.6 577.2 405.1 572.5 407.3 568.4 408.6 566.6 411.5 563.5 414.9 561.2 416.7 560.3 420.4 559.1 422.4 558.7 426.4 558.5 430.4 558.8 434.5 559.6 438.4 560.7 442.2 562.1 449.2 565.4 456.9 569.8 464.4 574.9 473.3 582.0 484.1 591.9 486.6 593.5 488.7 594.3 490.4 594.4 491.8 594.3 494.8 593.4 498.7 591.4 502.3 588.6 506.2 584.7 509.3 580.6 510.4 578.5 510.8 577.2 510.7 576.1 510.2 575.5 509.3 575.3 507.6 575.6 505.4 576.5 503.0 577.8 496.7 581.8 491.2 586.4 488.2 589.8 487.4 591.2 486.8 592.6 486.7 593.9 487.1 595.0 487.8 595.7 489.0 596.1 490.5 596.1 492.0 595.8 495.7 594.3 499.8 591.6 503.6 588.3 507.8 583.8 510.5 579.7 511.4 577.9 511.8 576.4 511.8 575.3 511.2 574.6 510.2 574.4 508.3 574.8 505.8 575.8 503.0 577.3 499.5 579.5 495.6 582.2 492.2 584.9 489.8 587.1 488.2 588.8 486.8 590.7 485.9 592.4 485.4 593.8 485.4 595.1 486.0 596.3 486.8 597.0 488.1 597.3 489.7 597.3 491.4 597.0 493.3 596.4 495.4 595.3 499.8 592.4 504.0 588.8 508.6 583.8 511.7 579.2 512.6 577.2 513.1 575.5 513.0 574.2 512.5 573.6 511.4 573.3 509.4 573.7 506.7 574.8 503.6 576.5 499.7 578.9 495.4 581.9 491.6 584.9 488.5 587.6 486.8 589.4 485.3 591.4 484.4 593.2 483.9 594.7 483.9 596.3 484.5 597.6 485.5 598.5 486.9 598.9 488.6 598.9 490.4 598.6 492.4 597.9 494.7 596.8 499.4 593.7 504.7 589.2 509.2 584.1 511.2 581.5 512.8 578.9 514.0 576.5 514.6 574.5 514.5 573.1 514.1 572.4 512.9 572.0 510.5 572.5 507.5 573.8 504.0 575.7 498.9 578.9 494.1 582.2 489.5 585.9 486.4 588.7 484.4 591.0 483.1 593.0 482.2 594.8 481.8 596.7 482.0 598.3 482.8 599.6 484.0 600.5 485.7 601.0 487.6 600.9 490.0 600.4 492.3 599.5 494.9 598.2 497.7 596.3 500.2 594.5 505.5 589.7 510.6 583.9 512.9 580.8 514.7 577.8 516.0 575.1 516.5 572.9 516.4 571.3 515.7 570.6 515.0 570.4 513.7 570.4 510.6 571.4 506.1 573.8 501.0 576.8 494.6 581.2 488.5 585.7 484.5 589.3 481.7 592.4 479.9 595.5 479.2 598.2 479.2 599.5 479.4 600.7 479.9 601.8 480.6 602.6 481.6 603.3 482.5 603.7 483.9 604.0 485.2 604.0 488.5 603.3 492.0 601.9"/><path stroke="#38598c" d="M430.3 662.9 427.7 664.0 424.4 664.3 420.3 664.0 418.0 663.5 413.0 661.9 410.3 660.7 404.5 657.3 401.5 655.2 398.3 652.6 395.2 649.6 392.0 646.2 388.9 642.4 385.8 638.0 382.8 633.2 380.0 627.9 377.4 622.1 375.1 615.9 373.1 609.3 371.5 602.3 370.3 595.1 369.6 587.7 369.4 580.3 369.7 572.9 370.6 565.7 372.1 558.8 374.0 552.4 376.5 546.5 379.4 541.2 382.8 536.6 386.5 532.8 390.5 529.6 394.8 527.3 399.2 525.6 403.8 524.6 408.5 524.1 413.1 524.3 417.8 524.8 422.4 525.8 426.9 527.1 431.4 528.6 439.9 532.2 447.9 536.0 471.4 548.1 476.8 550.7 484.0 553.8 488.2 555.3 493.7 556.9 498.2 558.0 505.2 559.3 507.1 560.0 507.6 560.7 507.4 561.7 506.6 563.0 505.3 564.5 500.0 569.7 487.5 580.9 482.5 585.5 478.3 590.1 475.4 594.4 474.0 597.4 473.2 600.3 472.9 603.5 473.0 606.3 473.7 608.9 474.7 610.9 476.1 612.2 478.2 613.0 480.6 613.1 483.8 612.4 487.5 610.9 491.4 608.8 495.3 606.2 499.7 602.8 503.6 599.4 507.8 595.2 512.0 590.4 516.3 585.1 520.2 579.4 522.8 575.1 525.3 569.8 526.4 566.4 526.7 563.8 526.4 562.5 526.1 562.1 525.7 561.7 524.6 561.3 522.1 561.6 519.0 562.8 515.2 564.8 506.7 570.0 478.6 588.4 472.5 592.9 468.4 596.8 465.4 600.6 460.2 608.7 458.7 610.5 457.0 612.2 454.6 614.1 452.0 615.4 449.5 616.3 446.7 616.9 443.4 617.1 439.8 616.7 435.8 615.7 432.4 614.2 429.0 612.1 426.5 610.0 423.4 606.5 421.4 603.4 419.7 599.9 418.5 596.2 417.8 592.3 417.7 588.5 418.2 584.8 419.4 581.5 421.1 578.6 423.3 576.4 425.0 575.2 426.9 574.4 428.9 573.8 432.0 573.5 434.2 573.6 437.4 574.1 440.5 575.0 443.5 576.2 446.4 577.7 449.8 579.8 454.9 583.9 457.2 586.2 459.2 588.5 461.1 591.2 462.6 593.8 463.7 596.2 464.6 598.9 465.2 601.5 465.4 604.2 465.4 606.7 465.0 609.1 464.3 611.6 463.4 613.6 462.1 615.6 460.8 617.2 459.0 618.8 456.9 620.2 454.7 621.3 452.1 622.3 449.6 622.9 446.8 623.3 442.9 623.4 438.3 622.8 434.3 621.7 430.0 619.8 425.6 616.9 422.4 614.0 419.3 610.5 416.5 606.3 414.3 601.6 412.6 596.4 411.8 591.0 411.7 587.3 412.3 582.1 413.2 579.0 414.6 576.1 415.4 574.8 417.2 572.5 419.4 570.6 420.6 569.8 423.1 568.6 425.8 567.8 430.0 567.4 434.3 567.7 438.5 568.7 442.6 570.2 446.5 572.0 451.1 574.6 456.2 578.1 460.4 581.6 464.4 585.5 467.0 588.4 469.4 591.7 471.7 595.4 475.4 602.2 476.5 603.7 477.7 605.0 479.0 606.0 480.3 606.6 481.8 606.9 483.5 606.9 486.0 606.5 489.0 605.5 492.0 604.1 495.3 602.1 498.3 600.0 501.5 597.4 504.9 594.3 508.4 590.7 511.9 586.7 514.4 583.5 517.4 579.1 519.2 575.8 521.1 571.9 521.8 569.4 521.9 567.5 521.3 566.2 520.1 565.7 518.9 565.7 517.4 566.0 513.9 567.5 508.5 570.4 499.3 576.2 488.0 583.8 481.3 588.9 477.1 592.6 474.8 595.1 473.2 597.5 471.9 600.0 471.1 602.4 470.4 605.3 470.0 608.8 469.7 618.6"/><path stroke="#33628d" d="M515.5 611.6 515.8 606.8 516.4 603.6 517.3 600.3 519.7 593.5 525.8 578.4 528.0 571.0 528.6 567.5 528.3 564.8 527.6 563.5 527.2 563.1 525.9 562.6 524.3 562.6 521.3 563.3 517.6 564.9 513.5 567.1 503.1 573.5 477.6 589.8 472.0 594.1 468.3 597.8 465.8 601.2 461.0 608.9 459.3 611.1 457.6 612.8 455.2 614.6 452.7 616.0 449.7 617.1 446.8 617.6 443.4 617.8 439.7 617.5 435.5 616.4 432.1 614.9 428.6 612.6 426.0 610.4 422.8 606.7 420.7 603.5 419.0 599.8 417.7 595.9 417.0 591.9 417.0 587.9 417.6 584.0 418.9 580.6 420.7 577.7 423.1 575.5 424.9 574.3 426.9 573.5 429.0 573.0 432.3 572.7 434.5 572.9 437.9 573.5 441.1 574.5 444.2 575.8 447.1 577.4 450.6 579.6 453.7 582.0 456.4 584.4 458.7 586.7 461.0 589.6 462.7 592.3 464.1 594.8 465.2 597.6 466.0 600.2 466.5 603.0 466.7 605.9 466.6 608.6 466.1 611.4 465.3 613.9 464.3 616.1 462.9 618.1 461.3 619.9 459.4 621.3 457.2 622.6 454.9 623.7 452.1 624.6 449.5 625.2 446.5 625.5 441.3 625.5 436.3 624.5 431.8 623.0 427.1 620.5 423.6 617.9 420.1 614.6 416.8 610.5 413.9 605.7 411.7 600.3 410.2 594.4 409.6 588.4 409.7 584.4 410.4 580.7 410.9 578.9 412.2 575.5 413.9 572.6 415.0 571.3 417.2 569.1 419.8 567.4 422.6 566.2 425.6 565.5 430.2 565.3 433.4 565.6 438.0 566.6 442.5 568.2 446.7 570.1 450.6 572.2 454.1 574.5 458.3 577.4 461.8 580.3 466.1 584.3 469.9 588.4 472.6 592.0 477.1 598.5 478.9 600.7 480.3 601.9 481.7 602.6 483.1 603.1 484.8 603.3 487.2 603.0 489.5 602.4 492.2 601.3 495.1 599.7 498.4 597.5 501.2 595.2 504.2 592.6 507.2 589.6 510.2 586.2 513.0 582.6 515.4 579.0 516.9 576.4 518.3 573.3 518.8 571.4 518.8 570.3 518.6 569.5 517.9 568.7 517.1 568.4 516.1 568.4 512.7 569.4 508.5 571.6 503.7 574.4 496.1 579.3 488.7 584.6 483.7 588.6 480.1 592.1 478.0 594.8 476.6 597.6 475.9 600.5 475.9 603.0 476.6 605.3 477.2 606.3 478.0 607.1 480.0 608.1 482.5 608.4 485.2 608.0 488.2 607.0 491.1 605.6 494.4 603.7 498.2 601.0 501.5 598.2 507.8 592.2 511.5 588.0 514.2 584.7 517.5 580.0 519.6 576.5 521.7 572.2 522.7 569.4 523.0 567.1 522.6 565.6 521.5 564.8 520.3 564.7 518.9 564.9 516.3 565.9 512.0 568.0 504.9 572.3 493.0 580.0 484.4 586.0 478.8 590.3 476.1 592.6 474.1 594.7 472.5 596.7 471.0 599.0 469.2 603.3 466.1 613.5 464.8 616.1 463.3 618.4 460.8 620.8 457.7 622.9 453.9 624.5 450.3 625.5 446.6 626.0 442.3 626.0 438.3 625.4 435.1 624.6 431.7 623.4 428.1 621.6 424.5 619.2 420.9 616.0 417.5 612.1 415.4 609.1 413.6 605.8 411.9 602.1 410.7 598.3 409.7 594.3 409.2 590.2 409.2 586.1"/><path stroke="#2f6b8e" d="M506.7 614.1 504.7 611.9 503.6 609.7 503.2 607.4 503.6 604.3 504.4 601.9 506.1 598.4 515.3 583.6 518.9 576.5 520.1 573.0 520.5 570.9 520.4 569.7 520.1 568.8 519.2 568.0 517.7 567.8 515.7 568.1 513.3 569.0 510.5 570.4 502.4 575.1 490.8 582.9 484.2 587.8 479.6 591.9 476.7 595.5 475.7 597.3 474.8 599.4 474.4 601.3 474.2 603.3 474.4 605.2 474.8 606.9 475.5 608.3 476.5 609.5 477.7 610.3 479.1 610.8 480.6 610.9 482.4 610.8 486.4 609.7 491.2 607.4 496.4 604.0 502.6 598.9 508.5 593.1 513.5 587.3 518.2 580.9 522.1 574.4 523.7 570.8 524.5 568.7 525.0 566.0 525.0 564.6 524.5 563.6 523.7 563.0 521.8 562.9 519.2 563.6 515.9 565.1 512.2 567.1 505.6 571.2 493.7 579.0 483.9 585.5 478.2 589.5 473.1 593.8 471.0 595.9 469.4 597.9 467.0 601.6 462.6 610.3 461.2 612.4 459.5 614.4 457.3 616.2 454.5 617.9 451.6 619.1 448.1 620.0 444.7 620.3 440.7 620.1 437.3 619.5 433.5 618.2 430.6 616.8 427.7 614.9 424.8 612.5 422.1 609.5 419.6 606.0 418.1 603.4 416.3 599.1 415.4 596.1 414.6 591.5 414.5 588.4 415.0 583.9 415.8 581.1 417.5 577.5 420.0 574.5 422.9 572.3 425.1 571.3 427.5 570.7 431.2 570.3 433.7 570.5 436.2 570.9 441.1 572.3 445.7 574.3 450.8 577.3 456.0 581.2 460.7 585.6 464.1 589.7 466.5 593.4 468.4 597.2 469.8 601.2 472.2 609.7 473.1 611.7 474.0 613.1 475.3 614.2 477.0 614.9 478.9 615.1 481.0 614.8 484.0 613.9 488.0 612.2 492.2 609.7 496.3 606.7 501.1 602.8 505.3 598.9 509.7 594.3 513.1 590.3 517.6 584.5 520.8 580.0 524.4 573.9 526.5 569.6 527.8 565.8 528.2 562.8 527.9 561.4 527.7 560.9 527.2 560.5 526.1 560.0 524.5 560.1 521.4 561.0 519.0 562.2 514.8 564.5 474.9 590.2 469.8 594.0 466.3 597.3 463.7 600.3 458.7 607.0 455.9 609.9 453.9 611.5 451.9 612.6 449.7 613.6 447.1 614.3 444.2 614.6 441.0 614.5 437.5 613.7 434.5 612.6 431.5 611.0 428.5 608.7 425.7 605.8 423.9 603.2 421.9 599.2 420.8 596.0 420.2 592.7 420.0 589.4 420.4 586.2 421.4 583.3 422.8 580.8 424.0 579.4 425.4 578.3 426.9 577.3 428.5 576.6 432.1 575.9 433.9 575.9 436.8 576.2 441.3 577.5 446.4 580.0 450.8 583.0 454.8 586.7 457.8 590.5 460.1 594.5 461.3 598.2 461.8 600.3 461.9 602.4 461.5 606.2 460.2 609.6 459.3 611.2 458.1 612.7 455.3 615.1 453.3 616.3 451.4 617.1 449.3 617.7 447.0 618.2 444.3 618.4 442.1 618.4 439.8 618.1 437.3 617.6 434.8 616.7 432.1 615.5 429.4 613.9 427.6 612.6 424.1 609.3 421.0 605.1 419.7 602.8 418.5 600.2"/><path stroke="#2c738e" d="M463.7 649.3 459.1 649.1 447.0 649.6 440.1 649.3 433.6 648.3 429.9 647.3 425.9 646.0 419.6 643.1 415.1 640.3 412.8 638.6 408.2 634.7 405.9 632.3 401.5 627.0 397.3 620.6 395.4 617.0 393.6 613.2 392.0 609.1 390.6 604.9 389.4 600.5 388.5 596.0 387.8 591.4 387.5 586.7 387.4 582.0 387.6 577.4 388.2 572.9 389.0 568.6 390.2 564.5 391.7 560.7 393.4 557.1 395.4 553.9 397.7 551.1 400.1 548.7 402.8 546.6 405.6 545.0 408.5 543.7 411.5 542.8 414.6 542.2 417.8 542.0 421.0 542.0 427.3 542.8 433.5 544.4 442.4 547.7 450.6 551.6 460.3 556.7 479.7 567.5 493.8 574.9 496.6 576.5 497.5 577.3 498.0 578.1 498.3 578.8 498.2 579.6 497.5 581.3 494.8 585.5 493.9 587.2 493.6 588.7 493.8 589.2 494.2 589.5 495.4 589.6 497.1 589.1 499.0 588.1 501.0 586.5 503.0 584.5 504.4 582.7 505.0 581.2 504.9 580.7 504.7 580.4 503.6 580.3 501.5 581.1 499.1 582.6 496.8 584.4 495.0 586.2 493.8 587.8 493.5 589.0 493.6 589.6 493.9 589.9 495.1 590.0 496.9 589.5 499.0 588.2 501.2 586.6 503.1 584.7 504.6 582.7 505.3 581.1 505.3 580.4 505.1 580.1 503.9 580.0 501.8 580.8 499.2 582.4 496.5 584.4 494.6 586.4 493.4 588.1 493.1 589.4 493.2 589.9 493.6 590.2 494.8 590.4 496.7 589.8 499.0 588.5 501.3 586.7 503.4 584.6 505.0 582.5 505.7 580.8 505.7 580.1 505.5 579.8 505.0 579.6 504.2 579.7 501.9 580.6 499.1 582.3 496.2 584.5 494.2 586.5 493.0 588.3 492.6 589.7 492.8 590.3 493.2 590.6 494.7 590.7 496.7 590.1 498.9 588.8 501.3 586.9 503.6 584.7 505.3 582.4 506.1 580.5 506.1 579.8 505.9 579.4 505.4 579.2 504.5 579.3 502.0 580.3 499.1 582.1 496.0 584.5 493.8 586.6 492.5 588.5 492.1 590.1 492.4 590.7 492.8 591.0 494.4 591.1 496.6 590.4 499.0 589.0 501.6 587.0 504.0 584.6 505.8 582.1 506.6 580.1 506.6 579.5 506.4 579.1 505.7 578.8 504.5 579.0 501.0 580.6 496.9 583.5 493.5 586.7 492.5 588.0 491.8 589.2 491.6 590.3 491.8 591.1 492.5 591.5 493.4 591.7 494.8 591.4 496.2 590.9"/><path stroke="#297b8e" d="M448.0 666.3 444.5 666.9 440.0 667.2 436.4 667.1 432.4 666.8 425.5 665.5 420.2 664.0 417.4 662.9 411.5 660.1 405.2 656.2 402.0 653.8 398.7 650.9 395.4 647.7 392.1 644.1 388.9 639.9 385.8 635.4 382.8 630.3 380.0 624.8 377.5 618.8 375.3 612.4 373.4 605.6 371.9 598.5 370.9 591.2 370.3 583.8 370.3 576.4 370.9 569.2 372.0 562.1 373.6 555.5 375.8 549.3 378.4 543.7 381.5 538.7 385.0 534.4 388.8 530.9 392.9 528.1 397.2 526.0 401.7 524.6 406.3 523.9 410.9 523.7 415.6 524.0 420.2 524.8 424.8 525.9 429.2 527.2 433.6 528.8 442.0 532.5 449.9 536.3 470.0 546.7 480.6 551.7 485.2 553.5 491.2 555.5 497.6 557.2 504.8 558.7 506.4 559.3 507.1 559.7 507.4 560.6 507.1 561.7 504.7 564.8 499.1 570.2 482.3 585.4 478.1 590.0 475.2 594.3 473.7 597.4 472.9 600.3 472.5 603.2 472.6 606.4 473.1 609.1 474.2 611.3 475.4 612.7 477.2 613.6 479.7 613.9 482.8 613.4 486.2 612.1 490.7 609.8 494.5 607.3 498.8 604.0 503.8 599.7 508.0 595.4 512.4 590.5 516.7 585.0 520.7 579.1 524.1 573.3 526.4 568.1 527.2 564.9 527.2 562.5 526.6 561.4 526.2 561.1 524.9 560.8 522.4 561.2 519.1 562.5 515.2 564.6 507.9 569.1 477.0 589.2 471.7 593.2 467.6 596.9 464.8 600.4 459.5 608.2 456.5 611.4 454.4 612.9 451.9 614.3 449.5 615.2 446.8 615.8 443.7 616.1 440.2 615.8 436.4 614.9 433.2 613.5 430.0 611.6 427.6 609.6 424.6 606.4 422.6 603.6 420.4 599.2 419.3 595.7 418.7 592.1 418.7 588.4 419.2 585.0 420.3 581.9 422.0 579.3 424.1 577.2 425.7 576.1 427.5 575.3 429.4 574.8 432.4 574.5 434.4 574.5 437.4 575.0 440.4 575.9 443.3 577.0 446.0 578.4 449.3 580.5 454.2 584.3 456.4 586.6 458.3 588.8 459.8 591.0 461.3 593.5 462.4 596.0 463.2 598.3 463.6 600.4 463.9 602.9 463.9 605.2 463.6 607.3 462.9 609.7 462.1 611.6 461.0 613.4 459.6 615.1 457.8 616.7 456.0 617.9 453.9 619.1 451.9 619.9 449.6 620.5 447.0 620.9 442.5 621.1 438.3 620.5 434.5 619.4 430.5 617.6 426.5 614.9 423.6 612.2 420.8 609.0 418.3 605.2 416.2 601.0 414.7 596.3 413.9 591.5 413.9 586.7 414.7 582.1 415.6 579.4 417.7 575.8 420.4 573.0 422.5 571.6 426.0 570.2 429.8 569.6 433.7 569.8 437.6 570.5 441.4 571.7 446.1 573.8 450.4 576.3 455.0 579.5 458.9 582.8 462.5 586.6 465.3 590.0 467.4 593.2 468.9 596.0 470.4 599.4 473.1 606.9 473.9 608.6 474.9 610.0 476.1 611.1 477.5 611.9 479.1 612.2 481.1 612.2 484.0 611.7 487.0 610.5 490.8 608.6 494.5 606.3 498.7 603.1 502.4 599.9 506.4 596.1 509.6 592.8 513.8 587.8 516.8 583.8 520.5 578.3 522.9 574.2 524.7 570.4 525.8 567.1 526.1 564.4 525.9 563.2 525.6 562.7 525.2 562.3 524.1 561.9 521.9 562.1 518.9 563.2 515.3 565.0 504.1 571.8 484.0 585.0 477.1 589.8 471.8 594.0 468.3 597.7 465.9 601.1 461.5 608.6 458.9 611.9 457.1 613.6 455.4 614.9 453.3 616.0 450.9 617.0"/><path stroke="#25838e" d="M439.2 634.5 434.2 633.5 428.5 631.5 423.9 629.1 419.1 625.7 414.4 621.3 411.4 617.7 408.6 613.5 407.3 611.2 404.9 606.3 403.1 600.9 402.3 598.1 401.2 592.3 400.8 586.4 401.2 580.7 402.2 575.2 403.9 570.3 406.3 566.0 407.7 564.1 411.0 560.9 412.7 559.7 416.6 557.8 420.7 556.7 424.9 556.3 429.2 556.5 433.5 557.3 437.7 558.4 441.8 559.9 445.6 561.5 451.1 564.3 456.0 567.1 461.8 570.7 467.8 574.9 472.6 578.5 486.0 589.8 488.5 591.3 490.6 591.9 493.1 592.0 495.8 591.3 498.7 589.8 502.0 587.4 505.1 584.3 507.4 581.2 508.2 579.6 508.5 578.6 508.3 577.7 507.8 577.3 506.8 577.3 505.3 577.7 501.6 579.5 497.1 582.5 493.1 586.0 490.8 588.6 489.6 591.0 489.5 592.0 489.8 592.8 490.4 593.3 491.2 593.6 493.5 593.3 496.6 592.1 499.8 589.9 502.9 587.3 506.1 583.9 508.4 580.5 509.0 579.2 509.2 578.1 509.1 577.3 508.6 576.8 507.8 576.7 506.4 576.9 502.4 578.8 497.1 582.2 492.7 585.9 490.0 589.0 489.2 590.2 488.7 591.5 488.6 592.6 488.9 593.4 489.6 594.0 490.4 594.3 492.8 594.1 496.1 592.8 499.5 590.6 503.3 587.5 506.7 583.7 509.2 580.0 509.8 578.6 510.0 577.4 509.9 576.6 509.3 576.1 508.3 576.0 506.7 576.4 502.3 578.5 496.5 582.3 491.8 586.3 489.0 589.5 488.3 590.8 487.8 592.1 487.7 593.3 488.0 594.2 488.7 594.8 489.8 595.2 491.0 595.2 492.4 595.0 495.9 593.6 499.6 591.2 503.6 587.7 507.4 583.6 509.8 579.9 510.6 578.3 510.9 576.9 510.8 575.9 510.3 575.4 509.3 575.2 507.5 575.6 505.2 576.5 502.7 577.9 496.4 582.0 493.2 584.6 490.9 586.6 488.0 590.0 487.2 591.4 486.7 592.8 486.6 594.1 487.0 595.2 487.8 595.9 488.9 596.2 490.5 596.2 492.0 595.9 495.8 594.3 499.9 591.6 503.8 588.2 508.0 583.6 510.7 579.5 511.6 577.7 512.0 576.2 511.9 575.1 511.3 574.5 510.2 574.3 508.2 574.8 505.7 575.8 502.8 577.4 499.3 579.6 495.4 582.4 492.0 585.1 489.6 587.3 488.0 589.0 486.6 590.8 485.7 592.5 485.3 594.0 485.3 595.3 485.8 596.4 486.7 597.1 488.0 597.5 489.6 597.5 491.7 597.0 494.1 596.1 496.3 594.9 498.8 593.3 501.4 591.2 506.2 586.6 508.7 583.7 510.4 581.3 512.1 578.5 513.0 576.5 513.3 574.6 512.9 573.7 511.9 573.2 510.3 573.4"/><path stroke="#228c8d" d="M484.5 665.1 480.5 660.9 478.7 658.3 477.6 656.0 477.0 654.0 476.9 652.3 477.2 650.6 478.1 648.5 479.6 646.3 482.3 643.3 499.1 627.3 509.4 616.4 515.5 609.3 519.8 603.8 524.3 597.8 528.9 591.2 535.8 580.5 540.2 572.9 544.1 565.3 547.5 557.9 550.2 551.0 551.8 545.0 552.2 542.5 552.3 540.4 552.0 538.6 551.5 537.3 550.5 536.5 549.3 536.1 547.7 536.2 545.8 536.8 541.2 539.1 538.4 540.8 532.4 545.2 511.6 561.4 504.5 566.6 497.7 571.4 491.2 575.6 485.1 579.2 479.4 582.2 471.8 585.5 465.1 587.8 459.4 589.2 454.5 589.9 449.1 590.0 444.1 589.3 441.9 588.6 440.2 587.8 438.7 586.7 437.9 585.6 437.8 584.7 438.3 584.0 439.4 583.7 441.2 584.1 443.3 585.0 445.4 586.4 447.0 587.9 448.7 589.9 450.0 592.0 451.0 594.1 451.5 595.9 451.7 597.9 451.5 599.9 451.0 601.6 450.1 603.3 449.1 604.4 447.5 605.6 445.9 606.4 443.7 606.9 441.7 607.0 439.5 606.8 437.2 606.1 434.8 604.9 433.0 603.6 431.3 601.9 429.8 600.0 428.6 597.8 427.8 595.4 427.4 593.0 427.4 591.2 427.8 589.0 428.4 587.5 429.6 585.7 431.1 584.4 433.0 583.6 435.6 583.2 437.8 583.4 440.5 584.1 443.1 585.3 445.9 587.1 448.2 589.2 450.0 591.5 451.3 593.8 452.2 596.4 452.5 598.6 452.3 600.9 451.6 603.0 450.3 604.9 448.5 606.4 446.5 607.4 444.2 608.0 442.0 608.2 439.6 607.9 437.1 607.2 435.1 606.3 433.1 604.9 431.1 603.2 429.4 601.2 428.0 598.8 426.9 596.3 426.3 593.6 426.2 591.5 426.5 589.0 427.1 587.2 428.3 585.2 430.0 583.7 432.0 582.7 434.8 582.1 437.3 582.2 440.3 583.0 443.1 584.2 446.2 586.2 448.8 588.4 451.1 591.3 452.5 593.7 453.5 596.5 453.9 599.1 453.5 601.9 452.7 604.1 451.3 606.1 449.3 607.7 446.8 608.9 444.3 609.4 441.9 609.5 439.3 609.2 436.5 608.3 434.2 607.2 432.0 605.7 429.9 603.7 428.1 601.4 426.6 598.7 425.5 595.7 424.9 592.7 424.9 590.4 425.4 587.6 426.2 585.7 427.3 584.1 429.2 582.4 431.5 581.3 434.7 580.8 438.1 581.1 441.4 582.1 444.4 583.6 447.7 585.9 450.4 588.4 452.8 591.5 454.4 594.5 455.2 597.4 455.5 600.2 455.1 603.0 453.9 605.6 452.3 607.6 450.2 609.3 447.5 610.5 444.7 611.1 442.1 611.2 439.2 610.9 436.2 609.9 433.7 608.7 431.2 607.0 428.9 604.8 426.8 602.1 425.1 599.1 424.1 596.5 423.4 593.1 423.3 590.5 423.7 587.2 424.6 584.9 425.8 583.0 427.9 581.0 430.4 579.8 431.8 579.4 434.0 579.1 437.1 579.4 440.8 580.4 444.3 582.0 448.1 584.4 451.2 587.2 454.0 590.5 455.9 593.7 457.0 596.8 457.5 600.1 457.3 603.2 456.4 606.0 454.8 608.5 452.4 610.6 449.8 612.1 447.5 612.9 444.9 613.3 442.6 613.4 440.1 613.2 437.4 612.6 435.3 611.8 433.1 610.7 431.0 609.4 428.9 607.7 427.0 605.7 425.2 603.3 423.7 600.7 422.4 597.8 421.8 595.8 421.3 592.7 421.1 590.7 421.3 587.7 421.8 585.8 422.4 584.1 423.2 582.5 424.2 581.1 426.1 579.3 427.5 578.5 429.8 577.5 431.4 577.2 434.0 577.0 436.6 577.3 439.2 577.9 441.8 578.7 445.0 580.3 447.2 581.6 449.9 583.5"/><path stroke="#1f948c" d="M467.8 657.7 463.5 656.6 458.1 655.6 442.0 654.0 436.7 653.2 430.7 651.9 426.4 650.5 419.4 647.5 414.5 644.6 412.0 642.9 406.9 638.7 401.9 633.5 397.1 627.1 394.8 623.5 392.7 619.6 390.7 615.4 388.9 610.9 387.3 606.2 385.9 601.3 384.9 596.2 384.2 591.1 383.7 585.8 383.7 580.6 384.0 575.4 384.6 570.4 385.6 565.6 387.0 561.1 388.7 556.8 390.7 553.0 393.0 549.6 395.6 546.5 398.4 544.0 401.4 541.9 404.5 540.3 407.8 539.1 411.2 538.3 414.7 537.9 418.2 537.8 421.6 538.0 425.1 538.6 432.0 540.2 438.6 542.6 447.9 546.6 456.2 550.9 477.7 562.4 486.4 566.7 496.6 571.2 499.2 572.8 499.8 573.5 500.0 574.4 499.8 575.4 499.3 576.5 497.7 578.6 492.1 585.3 490.7 587.3 489.8 589.1 489.3 590.4 489.2 591.7 489.6 592.7 490.3 593.3 491.4 593.5 492.5 593.5 495.3 592.6 498.4 590.9 501.8 588.3 505.1 585.0 507.8 581.5 508.7 579.7 509.1 578.6 509.2 577.6 508.9 577.0 508.2 576.7 506.9 576.8 505.2 577.4 503.1 578.4 498.3 581.4 493.6 585.1 490.7 588.0 489.0 590.7 488.7 591.7 488.7 592.8 489.1 593.6 489.7 594.0 490.7 594.3 491.9 594.3 493.5 593.9 495.1 593.3 498.5 591.4 502.1 588.5 505.7 584.9 508.6 581.1 509.9 578.2 510.0 577.1 509.7 576.4 509.0 576.0 507.6 576.1 505.8 576.7 503.6 577.8 498.3 581.1 493.1 585.1 490.1 588.2 488.1 591.1 487.7 592.4 487.7 593.5 488.2 594.3 488.9 594.9 490.1 595.2 491.3 595.1 493.1 594.7 494.9 594.0 498.5 592.0 502.4 588.8 506.3 584.8 509.4 580.6 510.3 578.9 510.8 577.5 510.9 576.3 510.5 575.6 509.7 575.2 508.1 575.4 506.0 576.2 503.6 577.4 497.3 581.4 491.9 585.7 488.8 589.0 487.7 590.4 486.9 592.0 486.6 593.3 486.7 594.5 487.2 595.3 488.0 595.9 489.3 596.2 490.9 596.1 494.4 595.0 498.2 592.8 502.6 589.4 506.8 585.0 510.3 580.3 511.3 578.4 511.9 576.8 512.0 575.5 511.5 574.7 510.6 574.3 508.9 574.6 506.5 575.4 503.8 576.8 496.8 581.3 493.2 584.1 490.6 586.3 487.2 590.0 486.2 591.5 485.5 593.1 485.3 594.5 485.5 595.7 486.1 596.6 487.0 597.2 488.4 597.5 490.1 597.4 491.9 597.0 493.8 596.2 498.0 593.8 502.7 590.1 507.5 585.2 511.0 580.5 512.2 578.3 513.0 576.4 513.2 574.8 512.9 573.8 512.0 573.3 510.6 573.3 508.7 573.9 505.8 575.2 502.0 577.4 498.1 580.0 493.9 583.0 490.8 585.5 486.9 589.3 485.5 591.0 484.4 592.8 483.8 594.5 483.7 595.9 484.0 597.1 484.6 598.1"/><path stroke="#1e9d89" d="M493.5 649.6 498.5 642.6 516.0 620.7 526.4 606.6 532.0 598.3 537.8 589.3 546.3 574.5 551.6 564.2 554.1 559.0 558.2 549.1 559.9 544.4 561.3 540.0 562.3 536.1 562.9 532.6 563.0 529.7 562.7 527.4 561.9 525.7 560.6 524.8 558.8 524.6 556.6 525.2 553.9 526.4 550.8 528.2 547.4 530.7 539.5 536.9 512.3 560.0 503.2 567.1 498.8 570.3 490.3 575.9 482.5 580.5 475.2 584.0 468.6 586.6 462.6 588.3 459.8 588.9 454.7 589.6 452.3 589.7 448.0 589.5 444.2 588.9 440.9 588.0 438.1 586.8 435.7 585.3 433.8 583.7 431.8 581.2 430.6 578.6 430.3 576.2 430.7 574.2 431.8 572.6 432.9 571.8 434.8 571.0 436.3 570.8 438.7 570.9 441.2 571.4 443.9 572.3 446.4 573.5 448.9 574.9 454.2 578.7 458.4 582.9 462.1 587.5 463.8 590.2 465.1 592.8 466.9 598.0 468.0 603.5 468.2 606.6 468.1 609.7 467.8 612.5 467.3 615.1 466.7 617.0 465.9 618.8 465.0 620.4 463.7 621.9 462.3 623.2 460.6 624.5 456.5 626.5 452.7 627.8 448.4 628.5 444.1 628.7 439.1 628.3 434.5 627.2 430.8 625.9 426.9 623.9 423.0 621.2 419.1 617.7 416.5 614.9 413.1 609.9 411.0 606.1 408.6 599.8 407.4 595.4 406.8 590.8 406.6 586.2 407.0 581.7 407.4 579.6 408.7 575.5 410.4 571.9 411.4 570.3 413.8 567.5 416.6 565.3 418.1 564.5 421.3 563.2 422.9 562.7 426.4 562.3 431.6 562.5 436.9 563.6 443.5 565.9 449.6 568.9 455.0 572.1 461.7 576.8 468.4 582.5 472.7 586.7 479.6 594.7 482.1 597.0 483.7 598.1 485.3 598.7 486.9 599.0 488.8 598.9 490.9 598.4 492.7 597.8 495.2 596.6 497.4 595.3 502.1 591.7 506.9 587.0 511.3 581.6 513.0 578.9 514.3 576.5 515.0 574.4 515.0 573.2 514.5 572.1 513.7 571.7 512.0 571.8 509.2 572.8 505.7 574.5 501.3 577.2 496.1 580.6 491.5 584.0 487.8 587.1 485.0 589.9 483.3 592.1 482.0 594.4 481.4 596.4 481.4 598.4 482.1 599.9 483.4 601.1 485.2 601.6 487.4 601.5 489.9 600.9 492.2 600.0 497.2 597.1 502.4 593.0 507.9 587.6 510.5 584.5 512.9 581.3 514.9 578.1 516.0 575.9 516.9 573.3 517.1 571.8 517.0 571.0 516.7 570.4 515.8 569.9 513.9 570.0 510.6 571.2 506.7 573.2 501.5 576.3 495.6 580.3 489.7 584.6 485.6 587.9 482.2 591.3 480.2 593.9 478.9 596.6 478.4 599.0 478.6 601.3 479.5 603.1 481.2 604.4 483.3 605.0 485.8 604.8 488.4 604.2 491.0 603.1 493.9 601.5 497.3 599.4 503.3 594.5 506.5 591.4 509.7 587.9 512.8 584.1 515.6 580.1 517.9 576.3 519.1 573.6 520.0 570.6 520.1 568.9 519.6 567.8 518.4 567.3 517.4 567.3 515.3 567.7 511.1 569.6 505.0 573.1 495.7 579.1 487.8 584.7 482.5 588.9 478.7 592.5 476.0 596.0 474.8 598.2 474.0 600.5 473.7 602.7 473.6 605.0 474.0 607.3 474.7 609.0 475.8 610.4 477.3 611.4 478.7 611.9 480.5 612.0 482.3 611.8 484.5 611.3 487.1 610.3 489.5 609.1 495.2 605.5"/><path stroke="#21a585" d="M458.6 636.3 463.4 640.3 467.1 642.4 468.3 642.9 469.7 643.1 470.9 642.9 472.2 642.4 474.9 640.8 480.1 637.1 490.2 629.2 498.7 621.7 506.4 614.0 513.5 606.1 521.2 596.4 529.2 585.0 535.0 575.7 540.0 566.2 543.9 557.2 545.6 552.0 546.1 549.7 546.5 545.9 546.2 544.5 545.7 543.4 545.0 542.6 543.9 542.2 542.6 542.2 541.1 542.5 539.3 543.2 535.0 545.4 527.3 550.5 506.5 565.9 497.7 572.0 486.9 578.7 482.1 581.4 475.4 584.6 471.4 586.3 466.1 588.3 461.5 589.7 456.4 590.8 452.2 591.4 447.6 591.7 443.7 591.4 440.9 590.7 442.1 591.6 443.0 592.9 443.7 594.2 444.0 595.5 444.0 596.7 443.6 597.8 442.9 598.7 442.0 599.2 440.4 599.5 438.6 599.1 437.1 598.2 435.8 596.8 435.0 595.1 434.9 593.4 435.4 592.1 436.5 591.1 438.1 590.7 440.0 591.1 441.7 592.1 443.2 593.7 443.9 595.4 444.0 597.1 443.3 598.6 442.1 599.5 440.4 599.8 438.6 599.4 436.9 598.4 435.6 596.9 434.8 595.1 434.6 593.3 435.1 591.9 436.4 590.8 438.0 590.4 440.1 590.8 441.9 591.9 443.4 593.5 444.2 595.2 444.3 597.1 443.7 598.7 442.3 599.7 440.5 600.1 438.6 599.7 436.8 598.7 435.4 597.1 434.5 595.1 434.3 593.4 434.8 591.8 436.0 590.6 437.7 590.1 439.9 590.5 441.9 591.6 443.6 593.4 444.5 595.2 444.7 597.2 444.0 598.9 442.5 600.0 440.7 600.4 438.6 600.0 436.7 598.9 435.1 597.3 434.2 595.2 434.0 593.1 434.6 591.5 435.1 590.8 435.9 590.2 437.8 589.8 440.2 590.2 442.3 591.5 444.0 593.5 444.9 595.4 445.0 597.5 444.2 599.2 443.4 600.0 442.6 600.4 440.6 600.7 438.4 600.3 436.4 599.1 434.8 597.3 433.8 595.1 433.6 593.0 434.2 591.3 434.8 590.6 435.7 589.9 437.0 589.5 438.4 589.5 439.9 589.8 441.6 590.6 442.8 591.6 444.0 592.9 444.9 594.3 445.4 595.8"/><path stroke="#26ad81" d="M477.2 618.9 481.6 619.1 485.9 618.4 490.1 617.1 494.5 614.9 500.6 610.9 505.4 606.9 510.5 602.0 515.9 596.2 521.3 589.6 526.6 582.3 531.6 574.5 535.9 566.7 539.1 559.4 540.5 555.2 540.9 553.4 541.1 550.3 540.9 549.1 540.4 548.2 539.8 547.6 538.9 547.2 537.9 547.1 536.6 547.3 533.4 548.5 529.6 550.5 522.9 554.9 505.1 567.5 495.2 574.2 484.1 580.9 478.3 583.9 473.2 586.4 467.3 588.9 461.4 591.1 441.7 597.0 440.4 597.1 439.3 596.9 438.3 596.4 437.7 595.6 437.3 594.6 437.6 593.7 438.3 593.1 439.3 593.1 440.3 593.6 441.1 594.4 441.5 595.4 441.4 596.4 440.8 597.1 439.8 597.3 438.8 597.0 437.8 596.2 437.3 595.3 437.2 594.3 437.5 593.5 438.2 593.0 439.1 592.9 440.0 593.2 440.8 593.8 441.4 594.7 441.7 595.6 441.5 596.5 441.1 597.0 440.3 597.4 439.4 597.3 438.6 597.0 437.8 596.4 437.3 595.6 437.0 594.7 437.1 593.9 437.4 593.3 438.1 592.9 439.0 592.8 440.0 593.1 440.9 593.8 441.5 594.6 441.8 595.5 441.7 596.4 441.2 597.2 440.4 597.5 439.5 597.5 438.6 597.1 437.8 596.5 437.2 595.7 436.9 594.7 437.0 593.9 437.3 593.2 438.0 592.8 439.0 592.7 440.0 593.0 441.0 593.7 441.7 594.6 442.0 595.6 441.8 596.6 441.2 597.3 440.4 597.6 439.5 597.6 438.5 597.3 437.7 596.6 437.1 595.7 436.7 594.7 436.8 593.8 437.2 593.1 437.9 592.6 438.9 592.5 440.1 592.9 441.0 593.6 441.8 594.6 442.1 595.6 442.0 596.7 441.4 597.4 440.5 597.8 439.3 597.7 438.1 597.2 437.1 596.1 436.6 595.0 436.6 593.7 437.2 592.9 438.1 592.4 439.4 592.5"/><path stroke="#31b57b" d="M499.7 631.4 497.0 628.9 495.8 627.3 495.1 625.6 494.8 624.0 494.9 622.4 495.2 620.7 495.9 619.0 497.3 616.4 499.3 613.5 511.4 598.6 517.7 590.2 522.7 582.8 526.2 577.0 530.0 569.6 531.4 566.1 532.4 563.1 532.8 560.4 532.8 558.4 532.2 556.9 531.6 556.5 530.2 556.0 529.2 556.1 527.0 556.6 524.3 557.8 519.5 560.4 490.4 579.2 465.5 593.9 460.4 597.6 451.9 605.1 449.2 606.7 446.5 607.8 443.9 608.2 441.5 608.2 439.0 607.8 436.9 607.1 434.8 606.1 432.8 604.7 430.8 602.9 429.1 600.8 427.8 598.4 426.8 595.8 426.2 593.0 426.2 591.0 426.6 588.5 427.3 586.8 428.6 584.8 430.3 583.4 432.4 582.5 435.3 582.0 438.3 582.4 441.3 583.3 444.6 585.0 447.5 587.2 449.8 589.5 451.9 592.4 453.2 595.2 453.9 597.9 453.9 600.5 453.4 602.8 452.1 605.2 450.4 607.0 448.1 608.4 445.8 609.2 443.1 609.6 440.5 609.5 437.8 608.9 435.6 608.0 433.3 606.7 431.1 605.0 429.1 602.9 427.4 600.4 426.0 597.5 425.3 595.3 424.8 592.2 424.9 589.9 425.5 587.1 426.4 585.3 427.5 583.7 429.5 582.1 431.8 581.1 435.1 580.7 438.5 581.1 441.8 582.2 445.4 584.2 448.5 586.5 451.1 589.1 453.3 592.2 454.7 595.2 455.4 598.1 455.6 600.8 455.0 603.6 453.7 606.1 451.7 608.3 449.4 609.8 446.5 610.9 443.5 611.3 440.8 611.2 437.8 610.6 435.3 609.6 432.7 608.2 430.3 606.3 428.0 604.0 426.0 601.1 424.5 597.9 423.7 595.3 423.2 591.8 423.3 589.2 423.7 586.8 424.6 584.6 425.9 582.7 428.1 580.8 430.7 579.6 432.1 579.2 434.4 579.0 438.2 579.5 441.9 580.7 446.0 582.9 449.5 585.5 452.8 588.8 455.1 592.1 456.6 595.3 457.5 598.7 457.6 601.9 456.9 605.1 455.3 608.0 453.1 610.3 450.2 612.1 447.0 613.2 443.7 613.6 440.6 613.4 437.3 612.7 434.4 611.6 431.6 609.9 428.8 607.7 426.2 604.9 424.5 602.4 422.6 598.7 421.7 595.7 421.1 592.6 421.0 589.5 421.4 586.6 422.3 583.9 423.7 581.5 424.8 580.2 426.1 579.1 427.5 578.3 429.1 577.6 430.7 577.2 433.3 576.9 435.0 576.9 437.7 577.3 442.0 578.7 446.7 581.1 451.3 584.5 454.8 588.2 457.7 592.2 459.5 596.0 460.4 600.0 460.5 602.1 460.4 604.0 460.0 605.8 459.4 607.6 458.5 609.2 457.5 610.8 454.8 613.3 451.7 615.1 449.8 615.8 447.6 616.4 443.9 616.8 440.3 616.6 436.4 615.6 433.2 614.3 429.8 612.3 427.3 610.3 424.2 607.1 422.1 604.1 419.9 599.6 418.7 595.9 418.0 592.1 418.0 588.3 418.5 584.7 419.7 581.5 421.4 578.7 423.6 576.5 426.2 575.0 428.1 574.3 430.2 573.9 433.3 573.8 437.5 574.4 441.6 575.7 445.5 577.4 449.8 580.1 453.5 582.9 456.5 585.8 459.4 589.2 461.8 592.9 463.4 596.3 464.5 599.9 465.0 603.5 464.8 607.2 464.0 610.8"/><path stroke="#3fbc73" d="M506.2 627.0 505.3 624.5 505.0 623.3 504.9 620.7 505.2 618.1 506.3 614.1 507.4 611.3 509.7 606.9 523.5 584.1 526.7 578.2 529.5 572.4 531.6 567.1 532.7 562.7 532.9 560.3 532.8 559.3 532.2 557.8 531.6 557.3 530.2 556.8 529.3 556.8 527.0 557.3 522.9 559.1 518.0 561.8 491.0 579.3 466.3 594.0 460.8 598.1 454.6 603.9 452.4 605.7 449.6 607.4 446.4 608.6 443.7 609.0 441.2 609.0 438.5 608.5 436.3 607.7 434.1 606.5 432.0 605.0 430.0 603.0 428.2 600.7 426.8 598.1 425.9 595.2 425.4 592.3 425.5 590.2 426.1 587.5 426.9 585.7 428.0 584.2 429.8 582.7 432.0 581.7 435.1 581.3 438.4 581.6 441.5 582.7 445.0 584.5 448.1 586.8 450.5 589.3 452.7 592.2 454.1 595.2 454.8 598.0 454.8 600.6 454.2 603.4 452.9 605.8 451.2 607.7 448.9 609.2 446.1 610.2 443.2 610.6 440.5 610.4 437.6 609.8 435.2 608.8 432.8 607.4 430.5 605.6 428.3 603.3 426.9 601.3 425.4 598.3 424.5 595.9 423.9 592.6 423.9 590.1 424.5 587.0 425.3 585.0 426.6 583.2 428.6 581.4 431.1 580.3 432.5 579.9 434.6 579.8 438.2 580.2 441.8 581.3 445.7 583.4 449.0 585.9 452.1 589.0 454.4 592.3 455.8 595.4 456.7 598.7 456.7 601.8 456.0 604.7 454.6 607.2 452.5 609.4 449.6 611.2 446.5 612.2 443.3 612.6 440.3 612.4 437.1 611.6 434.4 610.5 431.7 608.9 429.1 606.7 426.7 604.0 425.1 601.7 423.4 598.2 422.5 595.3 422.0 592.4 422.0 589.6 422.4 586.8 423.3 584.4 424.5 582.2 425.6 581.0 426.8 580.0 429.6 578.5 431.1 578.1 433.6 577.8 437.7 578.3 441.7 579.5 446.2 581.8 450.6 585.0 454.0 588.5 456.7 592.5 458.4 596.2 459.2 600.1 459.0 603.6 458.1 606.8 456.3 609.7 453.7 612.2 450.5 613.9 447.0 615.0 443.4 615.3 440.1 615.0 436.4 614.1 433.3 612.8 430.2 610.9 427.9 609.0 425.0 605.9 423.1 603.2 421.1 599.0 420.0 595.7 419.4 592.2 419.4 588.7 419.9 585.5 420.9 582.5 422.5 579.9 424.5 577.9 426.1 576.9 427.8 576.1 429.6 575.6 432.4 575.2 434.3 575.3 437.3 575.7 442.0 577.2 447.2 579.8 452.2 583.5 454.6 585.7 456.6 587.9 458.3 590.0 459.9 592.6 461.8 597.0 462.4 599.2 462.8 601.3 462.8 603.3 462.7 605.6 462.2 607.7 461.5 609.7 460.5 611.6 459.4 613.1 457.7 614.8 456.1 616.1 454.1 617.3 452.2 618.1 450.1 618.8 447.7 619.4 443.6 619.7 439.6 619.3 436.1 618.5 432.5 617.0 428.7 614.8 425.8 612.6 422.3 608.8 419.9 605.4 417.8 601.5 416.3 597.2 415.4 592.8 415.2 588.3 415.7 584.0 417.0 580.1 418.9 576.8 421.5 574.2 424.5 572.4 427.9 571.3 431.4 571.0 435.1 571.3 438.7 572.1 443.3 573.8 447.6 576.0 451.4 578.4 455.5 581.5 458.9 584.6 462.1 588.2 464.9 592.1 466.7 595.6 468.3 599.5 469.4 603.4 470.3 608.5"/><path stroke="#50c46a" d="M484.0 621.4 488.1 620.2 492.4 618.3 496.8 615.6 501.5 612.1 506.5 607.7 511.8 602.4 517.4 596.2 521.1 591.6 526.7 583.9 532.0 575.7 536.7 567.4 539.2 562.0 541.9 554.9 542.7 551.0 542.6 548.0 542.3 547.0 541.7 546.2 540.8 545.7 539.8 545.5 538.5 545.6 535.3 546.7 531.3 548.8 524.3 553.4 505.6 566.9 495.1 574.0 485.7 579.7 475.5 585.0 466.0 589.0 456.8 591.8 451.4 593.0 443.0 594.6 439.9 595.8 439.2 595.7 438.8 595.3 438.7 594.7 439.0 594.4 439.6 594.5 440.1 595.0 440.1 595.6 439.7 595.9 439.1 595.7 438.6 595.2 438.6 594.7 439.0 594.4 439.6 594.5 440.1 595.0 440.1 595.6 439.7 595.9 439.1 595.8 438.6 595.3 438.6 594.7 439.0 594.3 439.6 594.4 440.1 595.0 440.2 595.6 439.7 596.0 439.0 595.8 438.6 595.3 438.5 594.6 438.9 594.3 439.6 594.4 440.2 595.0 440.2 595.6 439.7 596.0 439.0 595.9 438.5 595.3 438.5 594.6 438.9 594.2 439.7 594.3 440.2 595.0 440.3 595.7 439.8 596.1 439.2 596.0 438.6 595.6 438.4 595.0 438.5 594.4"/><path stroke="#63cb5f" d="M454.8 611.9 456.0 613.9 456.5 616.0 456.1 617.8 454.9 619.6 452.7 621.1 450.2 622.1 447.2 622.8 443.5 623.1 440.1 622.8 437.3 622.3 434.3 621.4 431.2 620.1 428.0 618.3 425.8 616.8 422.6 614.0 420.6 611.7 418.6 609.2 416.8 606.4 414.6 601.7 413.4 598.4 412.5 594.9 411.9 589.5 412.0 586.0 412.5 582.6 414.0 577.9 414.7 576.5 416.3 574.0 417.2 572.9 419.3 571.0 421.7 569.6 425.6 568.2 428.3 567.7 432.5 567.8 435.4 568.2 439.5 569.3 443.5 570.9 448.5 573.3 452.9 576.0 456.7 578.8 460.7 582.2 464.5 586.0 467.0 589.0 469.3 592.2 471.5 595.9 475.1 602.6 477.2 605.5 478.5 606.5 479.8 607.1 481.2 607.5 482.9 607.5 485.3 607.2 488.2 606.3 491.1 605.0 494.4 603.1 498.1 600.5 501.3 597.9 504.8 594.8 508.4 591.1 511.9 587.0 514.5 583.7 517.6 579.2 519.6 575.8 521.5 571.8 522.2 569.2 522.4 567.2 521.8 565.9 520.5 565.3 519.3 565.3 517.9 565.6 515.2 566.6 511.0 568.8 504.0 573.0 493.7 579.8 486.0 585.1 480.2 589.5 477.5 591.8 475.0 594.4 473.1 596.8 471.6 599.4 470.6 601.9 469.8 604.5 468.1 613.4 467.3 616.5 466.0 619.4 464.2 622.0 462.6 623.5 460.6 624.9 458.4 626.2 455.5 627.3 452.6 628.2 449.8 628.7 446.6 629.1 443.9 629.1 438.8 628.6 435.4 627.9 433.0 627.1 427.8 624.9 423.8 622.3 419.8 619.0 416.0 614.8 412.5 609.7 409.6 603.7 407.5 597.1 406.6 592.5 406.3 587.8 406.3 585.4 406.8 580.9 407.8 576.7 408.5 574.7 410.4 571.1 412.6 568.1 413.9 566.8 416.8 564.7 420.0 563.1 423.3 562.2 426.8 561.9 430.4 562.0 434.0 562.5 437.5 563.4 440.9 564.5 445.8 566.6 450.3 568.9 454.4 571.3 462.4 576.9 466.8 580.5 471.0 584.4 481.6 595.9 484.1 597.6 485.6 598.2 486.9 598.4 488.7 598.4 490.8 598.0 493.0 597.3 495.0 596.4 499.9 593.2 504.6 589.1 507.5 586.0 509.7 583.4 511.6 580.8 513.1 578.2 514.1 576.0 514.6 574.1 514.4 572.8 513.8 572.3 512.4 572.1 509.9 572.7 506.8 574.1 503.2 576.1 498.2 579.4 493.5 582.7 489.5 585.9 486.4 588.7 484.5 591.0 483.1 593.0 482.3 594.8 481.9 596.7 482.1 598.3 482.9 599.7 484.2 600.6 486.1 600.9 488.1 600.8 490.0 600.3 492.3 599.4 494.9 598.1 497.8 596.3 500.3 594.4 505.6 589.7 510.7 583.8 512.9 580.7 514.7 577.8 515.9 575.1 516.5 572.8 516.3 571.3 515.7 570.6 514.1 570.4 511.2 571.2 507.6 572.9 503.5 575.3 497.7 579.0 491.7 583.3 487.4 586.7 484.1 589.7 482.0 592.1 480.4 594.6 479.5 596.8 479.2 598.8 479.5 600.7 480.4 602.3 481.9 603.4 483.7 603.9 485.4 603.9 486.9 603.7 489.1 603.1 491.1 602.3 495.2 600.1 499.9 596.7 504.4 592.8 509.0 588.0 513.3 582.5 516.3 577.9"/><path stroke="#77d153" d="M455.6 663.7 440.0 662.4 431.8 661.1 424.6 659.2 419.4 657.2 416.7 655.9 411.0 652.7 408.1 650.7 402.1 645.8 399.1 642.9 396.1 639.6 393.2 635.9 390.4 631.8 387.7 627.3 385.2 622.4 382.8 617.2 380.8 611.6 379.0 605.7 377.6 599.5 376.5 593.2 375.9 586.7 375.7 580.2 376.0 573.8 376.7 567.5 377.9 561.5 379.6 555.8 381.7 550.6 384.2 545.9 387.1 541.8 390.3 538.2 393.8 535.3 397.5 533.0 401.3 531.2 405.4 530.1 409.5 529.4 413.6 529.3 417.8 529.5 422.0 530.2 426.1 531.1 430.1 532.3 437.9 535.1 448.9 540.2 470.0 551.1 479.3 555.7 488.6 559.5 493.1 561.0 501.0 563.4 503.2 564.3 504.0 565.0 504.3 565.5 504.3 566.1 504.0 567.2 502.8 568.8 499.6 572.3 486.4 585.2 483.1 589.2 481.0 592.7 480.3 594.4 479.8 596.3 479.7 598.0 480.0 599.5 480.5 600.8 481.4 601.8 482.7 602.6 484.0 602.9 486.0 603.0 488.3 602.5 491.1 601.5 493.9 600.2 496.9 598.3 499.6 596.3 505.4 591.2 508.3 588.1 511.2 584.7 513.8 581.2 515.9 577.7 517.5 574.5 518.3 571.9 518.3 569.9 517.6 569.1 516.9 568.8 516.0 568.8 513.5 569.3 509.6 571.1 505.0 573.7 498.4 577.9 490.8 583.2 485.4 587.4 481.5 591.0 479.4 593.4 477.8 595.9 476.8 598.6 476.4 601.0 476.7 603.3 477.7 605.4 479.4 606.8 481.4 607.4 483.8 607.4 486.3 606.9 489.3 605.8 492.3 604.3 495.7 602.2 499.6 599.3 502.9 596.5 506.4 593.1 510.0 589.2 513.4 585.0 516.7 580.5 518.7 577.2 520.9 573.0 521.9 570.2 522.3 568.0 522.0 566.4 521.4 565.7 520.5 565.4 519.4 565.4 517.9 565.7 514.4 567.1 510.1 569.3 500.7 575.2 488.0 583.7 481.1 588.8 476.8 592.6 474.8 594.7 473.3 596.7 472.0 599.0 470.9 601.4 469.6 606.0 468.0 615.6 466.8 619.3 465.9 621.0 464.7 622.6 463.3 624.0 461.7 625.2 459.0 626.8 455.7 628.2 452.1 629.2 448.4 629.8 444.9 630.0 440.9 629.8 436.4 629.0 432.8 627.9 427.5 625.6 423.4 623.0 419.3 619.6 416.6 616.8 412.9 611.8 410.7 607.9 407.9 601.5 406.6 596.9 405.8 592.1 405.6 589.6 405.5 584.8 406.1 580.2 407.2 575.8 408.9 571.9 411.1 568.5 413.7 565.8 416.7 563.7 418.3 562.8 421.7 561.7 425.3 561.1 428.9 561.1 432.6 561.5 438.0 562.8 441.5 564.0 446.5 566.2 451.1 568.6 455.2 571.1 463.3 576.7 467.8 580.4 472.0 584.2 480.4 593.1 482.4 595.1 485.0 596.8 487.5 597.4 489.3 597.4 491.3 597.1 493.5 596.3 495.4 595.4 500.1 592.4 504.6 588.5 507.3 585.6 509.3 583.2 511.0 580.8 512.4 578.4 513.3 576.4 513.7 574.7 513.4 573.5 512.6 572.9 511.6 572.9 510.3 573.1 507.0 574.4 502.4 577.0 496.4 581.0 491.7 584.5 488.0 587.7 485.4 590.6 483.7 593.5 483.2 594.8 483.1 596.3 483.4 597.6 484.0 598.6 485.1 599.3 486.2 599.6 487.7 599.7 489.4 599.4 493.2 598.1 497.4 595.7 501.5 592.6 505.8 588.6"/><path stroke="#8bd646" d="M497.0 652.8 493.9 650.6 491.7 648.5 490.0 646.4 489.0 644.4 488.3 642.4 488.1 640.6 488.3 638.8 489.1 636.0 490.6 633.2 493.6 629.2 508.7 612.1 517.5 601.4 525.1 591.0 532.6 579.2 536.1 573.0 539.3 566.9 541.9 561.0 544.0 555.6 545.2 550.9 545.5 547.2 545.3 545.8 544.8 544.7 544.1 543.9 543.1 543.5 541.9 543.4 540.4 543.7 538.7 544.2 534.6 546.2 527.3 551.0 507.2 565.7 495.9 573.5 485.6 579.7 481.0 582.2 474.7 585.2 465.9 588.7 461.6 590.0 456.7 591.2 452.8 591.9 448.4 592.3 444.9 592.3 441.3 592.1 442.4 594.3 442.6 595.9 442.4 596.7 442.0 597.3 440.7 598.0 439.6 598.0 438.5 597.6 437.5 596.9 436.7 595.9 436.3 594.7 436.4 593.6 436.8 592.8 437.7 592.2 438.9 592.1 440.2 592.5 441.3 593.3 442.2 594.5 442.5 595.7 442.4 596.9 441.7 597.8 440.7 598.2 439.5 598.2 438.3 597.7 437.3 596.9 436.5 595.8 436.1 594.6 436.2 593.6 436.7 592.7 437.5 592.1 438.8 591.9 440.2 592.3 441.4 593.2 442.3 594.5 442.7 595.8 442.6 597.1 441.8 598.0 440.7 598.4 439.4 598.4 438.2 597.9 437.1 597.0 436.4 595.9 435.9 594.6 436.0 593.5 436.5 592.6 437.4 591.9 438.7 591.7 440.2 592.2 441.5 593.0 442.5 594.4 443.0 595.8 442.8 597.1 442.0 598.1 440.9 598.6 439.5 598.6 438.2 598.1 437.0 597.2 436.2 596.1 435.7 594.7 435.8 593.5 436.2 592.5 437.2 591.7 438.6 591.5 440.2 591.9 441.6 592.9 442.7 594.3 443.2 595.8 443.0 597.2 442.2 598.3 440.9 598.8 439.6 598.8 438.2 598.3 437.0 597.4 436.1 596.2 435.5 594.8 435.5 593.5 436.0 592.4 436.9 591.6 438.5 591.3 440.3 591.8 441.9 592.9 443.1 594.6 443.4 596.3 443.0 597.8 441.8 598.8 440.1 599.1"/><path stroke="#a2da37" d="M492.8 658.6 489.1 656.7 486.1 654.8 482.8 652.2 480.5 649.9 479.0 647.9 478.0 645.6 477.8 643.7 478.4 641.5 479.5 639.7 481.7 637.3 496.7 623.9 502.3 618.4 507.2 613.4 516.2 603.0 522.1 595.4 526.1 589.8 532.0 580.7 535.8 574.4 540.7 564.9 543.4 558.9 545.3 553.4 546.4 548.8 546.5 546.8 546.5 545.2 546.1 543.9 545.5 543.0 544.6 542.4 543.5 542.1 542.1 542.2 538.5 543.5 534.1 545.9 526.2 551.3 508.3 564.6 496.5 572.8 485.9 579.3 481.0 581.9 474.5 585.0 470.6 586.7 465.3 588.5 460.8 589.8 455.8 590.9 451.8 591.5 447.3 591.7 443.5 591.4 440.9 590.7 442.0 591.5 443.1 592.9 443.8 594.4 444.1 595.9 443.9 597.2 443.4 598.2 442.4 599.1 441.2 599.5 439.7 599.5 438.0 598.9 436.5 597.8 435.5 596.4 434.9 594.9 434.8 593.3 435.3 592.0 436.4 591.0 437.9 590.6 439.9 590.9 441.7 591.9 443.1 593.4 443.9 595.1 444.1 596.9 443.5 598.4 442.2 599.5 440.6 599.8 438.7 599.5 437.0 598.6 435.6 597.1 434.7 595.3 434.5 593.4 435.0 591.9 436.2 590.8 437.9 590.3 439.9 590.7 441.9 591.8 443.5 593.5 444.3 595.3 444.4 597.2 443.7 598.8 442.3 599.8 440.5 600.2 438.5 599.7 436.7 598.7 435.3 597.1 434.4 595.1 434.2 593.3 434.7 591.7 436.0 590.5 437.8 590.0 440.0 590.4 442.0 591.6 443.7 593.4 444.6 595.3 444.8 597.3 444.0 599.0 442.5 600.1 440.7 600.5 438.5 600.1 436.6 599.0 435.0 597.3 434.1 595.2 433.9 593.2 434.4 591.5 434.9 590.8 435.7 590.2 437.6 589.7 440.0 590.1 442.2 591.3 444.0 593.3 445.0 595.3 445.1 597.4 444.8 598.4 444.4 599.2 443.6 599.9 442.8 600.4 440.9 600.8 438.6 600.4 436.6 599.3 434.8 597.5 433.7 595.3 433.5 593.2 434.0 591.4 434.6 590.6 435.4 589.9 437.0 589.4 439.0 589.5 441.0 590.2 442.7 591.4 444.3 593.1 445.2 595.0 445.6 596.9 445.2 598.6"/><path stroke="#bade28" d="M443.6 620.1 442.8 620.9 441.1 621.5 439.3 621.7 437.2 621.5 433.1 620.5 430.3 619.2 428.4 618.1 424.4 615.2 421.5 612.3 419.7 610.0 417.9 607.4 415.7 603.1 413.9 598.3 412.9 593.3 412.6 588.1 412.9 584.8 414.0 580.2 415.2 577.4 417.7 573.9 420.8 571.3 423.1 570.0 426.9 568.9 429.6 568.7 433.7 568.9 437.8 569.7 441.7 571.0 446.6 573.2 451.0 575.8 454.9 578.5 459.0 581.9 462.4 585.1 465.5 588.7 467.5 591.4 469.4 594.4 471.0 597.5 474.2 604.6 476.1 607.4 477.2 608.4 478.6 609.2 480.3 609.6 481.9 609.6 484.8 609.2 487.8 608.2 490.8 606.7 494.2 604.7 498.1 601.9 501.6 599.1 508.1 592.7 512.0 588.3 514.8 584.8 518.3 579.8 520.5 576.1 522.3 572.6 523.5 569.5 524.1 566.9 523.9 565.0 523.3 564.2 522.9 564.0 521.8 563.7 520.4 563.9 517.7 564.7 513.4 566.8 508.5 569.7 500.7 574.7 487.9 583.2 480.9 588.1 474.8 593.0 472.7 595.1 470.8 597.5 468.2 602.0 464.1 611.7 462.5 614.3 460.6 616.5 457.5 619.0 454.0 620.8 450.1 622.0 446.0 622.6 442.0 622.6 437.5 621.9 433.5 620.6 429.2 618.5 425.0 615.5 421.8 612.5 418.9 608.9 416.4 604.7 414.3 599.9 413.0 594.8 412.4 589.6 412.4 586.1 413.3 581.2 414.3 578.3 416.6 574.4 417.5 573.3 419.6 571.4 421.9 570.0 425.7 568.6 428.4 568.2 432.5 568.2 436.7 568.9 440.7 570.1 444.6 571.7 449.3 574.2 453.5 576.9 458.0 580.3 461.7 583.6 465.2 587.4 467.4 590.2 469.4 593.3 471.2 596.4 474.7 603.4 476.7 606.2 478.0 607.3 479.4 608.0 480.9 608.3 482.6 608.4 485.0 608.1 487.9 607.1 490.8 605.8 494.1 603.9 497.9 601.2 501.2 598.5 507.5 592.5 511.2 588.4 513.9 585.1 517.3 580.4 519.4 576.9 521.7 572.5 522.7 569.6 523.1 567.3 522.8 565.6 521.7 564.8 520.6 564.6 519.2 564.8 516.6 565.7 512.4 567.7 506.5 571.2 497.9 576.8 487.2 584.0 480.8 588.6 477.7 591.1 475.3 593.4 473.1 595.9 471.4 598.2 470.2 600.4 469.2 602.8 466.8 611.0 465.6 614.0 464.1 616.9 462.2 619.1 459.0 621.8 455.2 623.7 450.6 625.1 445.4 625.7 440.9 625.5 435.8 624.5 431.3 622.9 426.5 620.3 423.0 617.5 419.5 614.1 416.2 609.9 413.4 604.9 411.3 599.4 409.9 593.5 409.5 587.4 409.7 583.5 410.5 579.7 411.0 578.0 412.5 574.7 413.4 573.2 415.4 570.6 416.5 569.5 419.1 567.7 421.8 566.4 424.8 565.5 427.9 565.2 432.6 565.4 435.7 565.9 440.3 567.3 444.7 569.0 448.7 571.1 452.5 573.3 456.9 576.2 460.7 579.2 463.9 582.0 467.2 585.2 470.3 588.7 473.0 592.2 477.2 598.3 478.7 600.2 479.9 601.3 481.2 602.1 482.6 602.7 483.9 603.0 486.9 602.9 490.6 601.8 494.6 599.9 499.1 596.8 503.5 593.2 507.9 588.7 511.5 584.4 514.7 579.9"/><path stroke="#d2e21b" d="M454.7 648.5 450.7 649.1 446.5 649.4 442.7 649.4 438.3 649.1 431.6 647.9 427.8 646.8 423.8 645.2 419.5 643.1 417.3 641.8 412.8 638.7 410.5 636.9 405.9 632.5 403.6 629.9 399.3 624.0 395.4 617.1 393.6 613.3 392.0 609.3 390.6 605.1 389.4 600.7 388.5 596.1 387.8 591.5 387.4 586.8 387.3 582.2 387.5 577.5 388.1 573.0 388.9 568.7 390.1 564.6 391.6 560.7 393.3 557.2 395.3 554.0 397.6 551.2 400.0 548.7 402.7 546.7 405.5 545.0 408.4 543.7 411.4 542.8 414.5 542.2 417.7 542.0 420.9 542.0 424.1 542.3 430.4 543.5 436.5 545.4 445.2 548.9 453.1 552.8 479.7 567.5 494.3 575.1 496.9 576.7 498.1 578.1 498.3 578.8 498.2 579.5 497.5 581.3 494.8 585.5 493.9 587.2 493.6 588.7 493.8 589.2 494.2 589.5 495.4 589.6 497.1 589.1 499.0 588.1 501.0 586.6 503.0 584.5 504.4 582.7 505.0 581.2 505.0 580.7 504.7 580.4 503.6 580.3 501.5 581.1 499.1 582.6 496.8 584.3 495.0 586.2 493.8 587.8 493.4 589.0 493.6 589.6 493.9 589.9 495.1 590.0 496.8 589.5 499.0 588.3 501.1 586.6 503.1 584.7 504.6 582.7 505.3 581.1 505.3 580.4 505.1 580.1 504.0 580.0 501.8 580.8 499.2 582.3 496.5 584.4 494.6 586.3 493.4 588.0 493.0 589.4 493.2 589.9 493.6 590.2 494.8 590.4 496.7 589.8 499.0 588.5 501.2 586.8 503.3 584.7 505.0 582.6 505.7 580.8 505.7 580.1 505.5 579.8 505.0 579.6 504.2 579.7 501.9 580.6 499.1 582.2 496.3 584.5 494.2 586.5 493.0 588.3 492.6 589.7 492.8 590.3 493.1 590.6 494.6 590.7 496.7 590.1 498.9 588.8 501.3 587.0 503.6 584.7 505.3 582.4 506.2 580.5 506.2 579.8 505.9 579.4 505.4 579.2 504.5 579.3 502.0 580.3 499.1 582.1 496.0 584.5 493.9 586.6 492.5 588.5 492.1 590.1 492.4 590.7 492.8 591.0 494.4 591.1 496.6 590.4 499.0 589.0 501.5 587.0 503.9 584.6 505.8 582.2 506.6 580.1 506.6 579.4 506.3 579.0 505.4 578.8 504.0 579.2 502.0 580.1 499.8 581.4 495.6 584.6 493.9 586.2 492.5 587.9 491.8 589.2 491.6 590.4 491.9 591.3 492.7 591.6 494.1 591.6 495.6 591.1 497.5 590.2 499.3 589.1"/><path stroke="#eae51a" d="M483.9 652.6 470.7 647.1 467.7 646.1 465.1 645.5 460.6 645.2 449.8 645.9 444.0 645.9 438.4 645.4 431.9 644.1 426.4 642.3 420.4 639.4 416.3 636.7 412.0 633.4 407.8 629.3 405.8 626.9 401.8 621.5 398.2 615.2 396.6 611.7 393.9 604.3 391.9 596.2 391.3 592.1 390.9 587.9 390.7 583.7 390.9 579.5 391.3 575.5 392.0 571.5 393.0 567.8 394.2 564.2 395.7 561.0 397.5 558.0 399.4 555.3 401.6 552.9 403.9 550.9 406.4 549.2 409.0 547.9 411.7 546.8 414.5 546.1 417.4 545.7 420.3 545.6 426.1 546.0 429.0 546.5 434.7 547.9 442.8 551.0 450.3 554.5 461.3 560.4 491.3 578.0 495.0 580.3 496.5 581.6 497.3 582.7 497.5 583.9 497.2 586.0 497.5 586.5 498.4 586.4 499.9 585.5 501.2 584.1 501.4 583.6 501.3 583.3 500.2 583.5 498.6 584.6 497.5 585.9 497.3 586.4 497.5 586.7 498.6 586.4 500.2 585.3 501.4 584.0 501.5 583.5 501.4 583.2 500.2 583.5 498.5 584.7 497.4 586.0 497.2 586.5 497.4 586.8 498.6 586.5 500.2 585.4 501.5 583.9 501.7 583.4 501.5 583.1 500.3 583.4 498.4 584.6 497.2 586.0 497.1 586.6 497.2 586.9 497.8 586.9 498.5 586.6 500.3 585.4 501.6 583.9 501.8 583.3 501.6 583.0 501.2 583.0 500.3 583.3 498.4 584.6 497.1 586.1 496.9 586.7 497.1 587.0 497.6 587.0 498.4 586.8 500.3 585.5 501.7 583.8 501.9 583.2 501.8 582.9 501.1 582.9 500.1 583.3 497.8 585.1 497.1 586.0 496.8 586.8 497.0 587.2 497.7 587.1"/><path stroke="#fde725" d="M426.0 629.1 426.2 630.8 425.8 631.9 424.9 632.4 422.7 632.3 419.7 631.0 417.3 629.4 414.8 627.3 412.1 624.6 408.0 619.5 405.4 615.3 404.2 612.9 402.1 607.9 401.1 605.1 399.6 599.4 398.7 593.4 398.4 587.2 398.8 581.2 400.0 575.5 401.9 570.3 404.5 565.7 406.0 563.8 407.7 562.0 409.4 560.5 411.3 559.2 413.3 558.1 417.5 556.6 419.7 556.1 424.1 555.8 428.6 556.1 433.1 556.9 437.4 558.1 441.6 559.7 445.6 561.4 451.2 564.2 460.8 569.9 466.0 573.4 472.3 578.0 486.0 588.8 488.6 590.4 491.0 591.2 493.2 591.3 495.8 590.7 498.6 589.4 501.4 587.5 504.3 584.7 506.8 581.6 507.8 579.2 507.7 578.4 507.3 578.0 506.6 577.8 505.4 578.0 502.1 579.5 498.0 582.2 494.0 585.4 491.7 587.9 490.4 590.2 490.3 591.1 490.4 591.9 490.9 592.5 491.7 592.8 493.8 592.7 496.6 591.5 499.6 589.6 502.8 587.0 505.7 583.8 507.7 580.7 508.5 578.6 508.3 577.9 507.9 577.4 506.9 577.3 505.5 577.7 501.8 579.4 497.3 582.4 493.2 585.8 490.9 588.5 489.7 590.8 489.5 591.9 489.8 592.7 490.4 593.2 491.2 593.5 493.4 593.3 496.5 592.1 499.7 590.0 503.1 587.1 506.2 583.7 508.4 580.3 509.0 579.0 509.2 578.0 509.0 577.2 508.5 576.8 507.6 576.7 506.1 577.1 502.1 579.0 496.9 582.4 492.5 586.1 490.1 588.9 489.3 590.1 488.8 591.4 488.7 592.5 489.0 593.3 489.6 593.9 490.5 594.2 492.8 594.1 496.0 592.8 499.5 590.7 503.1 587.6 506.6 583.8 509.1 580.1 509.7 578.7 510.0 577.5 509.8 576.7 509.3 576.2 508.4 576.0 506.7 576.4 502.4 578.5 496.7 582.2 492.0 586.2 489.1 589.4 488.4 590.7 487.9 592.0 487.8 593.2 488.1 594.1 488.8 594.8 489.8 595.1 491.0 595.1 492.4 594.9 495.8 593.5 499.6 591.1 503.6 587.7 507.3 583.6 509.7 580.0 510.5 578.4 510.8 577.0 510.8 576.0 510.2 575.4 509.2 575.3 507.5 575.6 505.3 576.5 502.8 577.9 496.5 582.0 491.0 586.6 488.1 590.0 487.3 591.3 486.8 592.7 486.7 594.0 487.0 595.0 487.7 595.7 488.8 596.1 490.5 596.1 492.4 595.7 494.7 594.8 497.2 593.4 500.0 591.5 502.4 589.5 504.8 587.2 507.1 584.7 509.1 582.1 510.7 579.6 511.6 577.4 511.9 575.7 511.5 574.8 510.4 574.4 508.5 574.7 506.1 575.6"/></g></svg>
</body></html>
